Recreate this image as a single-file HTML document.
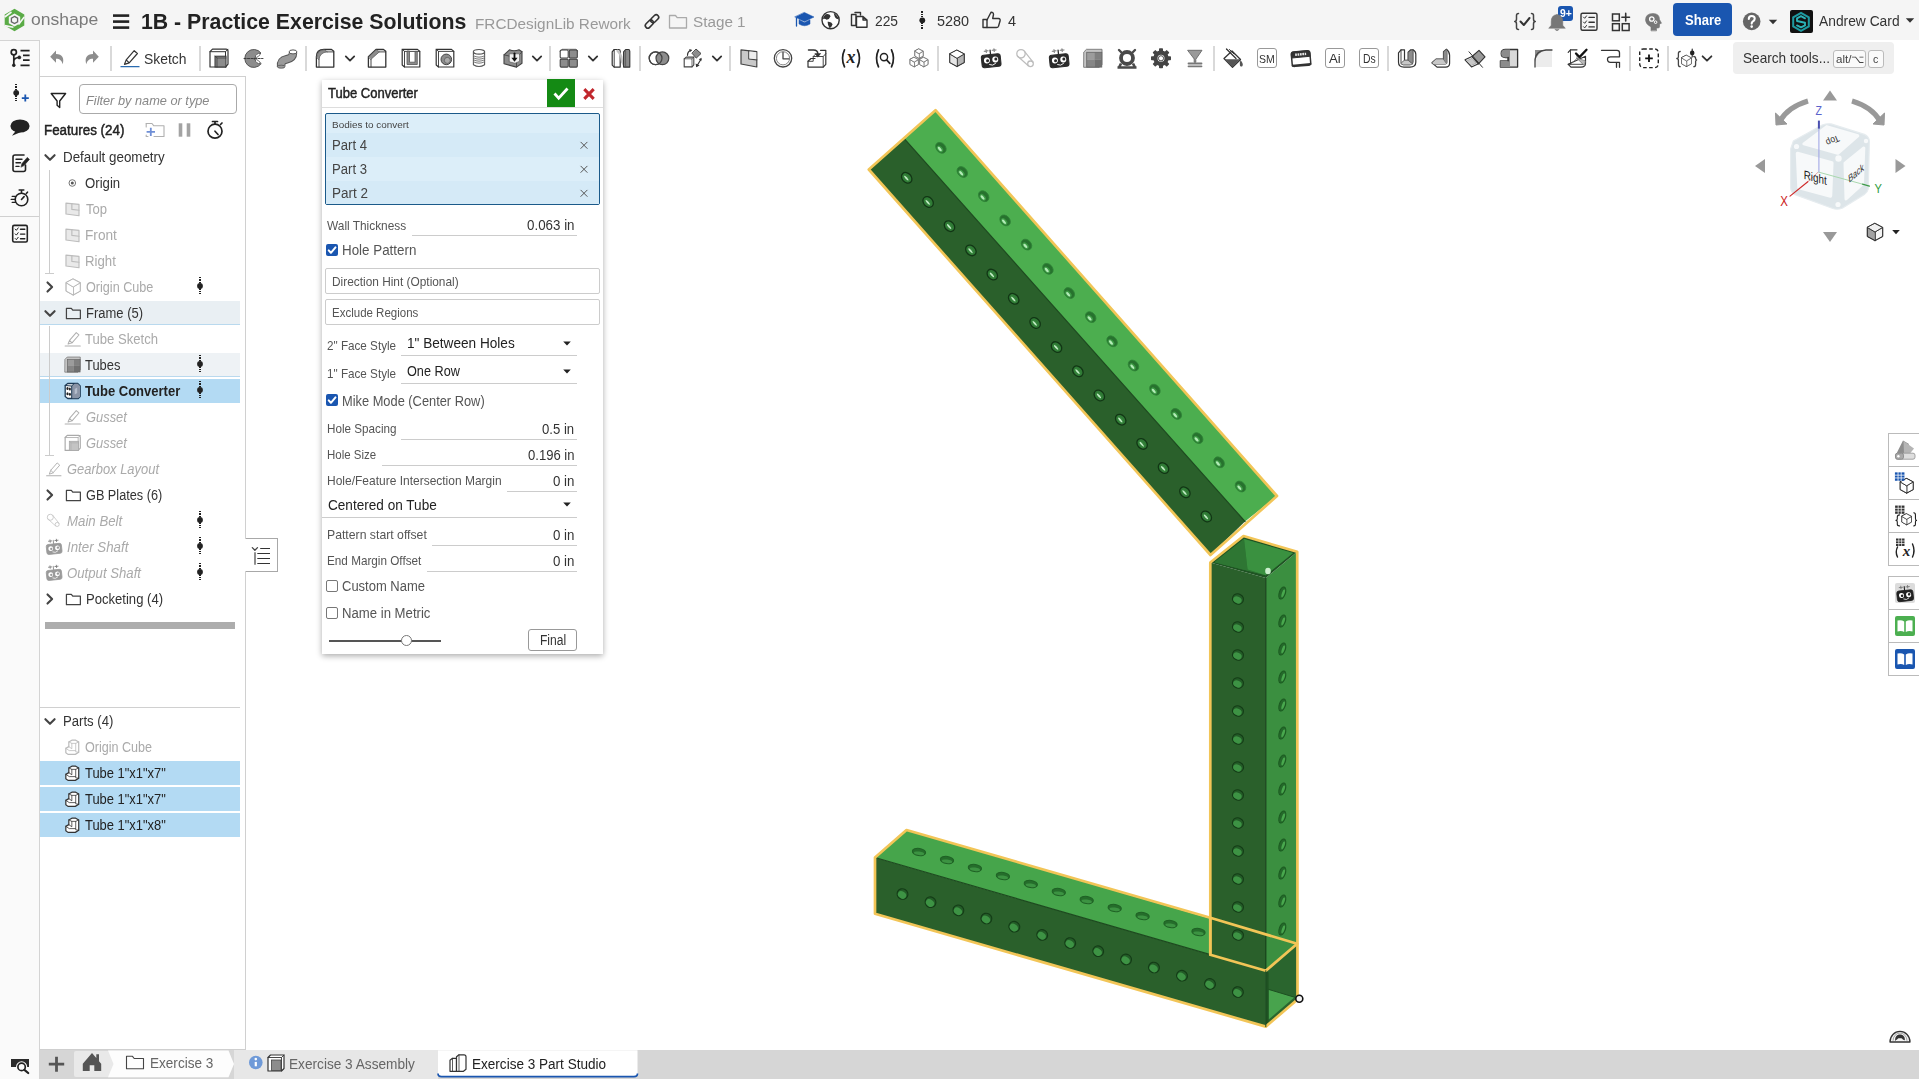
<!DOCTYPE html><html><head><meta charset="utf-8"><title>Onshape</title><style>
*{box-sizing:border-box;margin:0;padding:0}
html,body{width:1919px;height:1079px;overflow:hidden;background:#fff;font-family:"Liberation Sans",sans-serif}
.t{position:absolute;white-space:nowrap;line-height:1;transform-origin:0 50%;display:block}
.b{position:absolute}
svg{position:absolute;left:0;top:0;overflow:visible}
</style></head><body><svg width="1919" height="1079" viewBox="0 0 1919 1079"><polygon points="935.5,110.2 1277.0,496.0 1245.0,521.5 904.5,138.8" fill="#4cae4f" stroke="none" stroke-width="0" stroke-linejoin="round" /><polygon points="904.5,138.8 1245.0,521.5 1210.5,555.0 868.8,169.5" fill="#2a602b" stroke="none" stroke-width="0" stroke-linejoin="round" /><line x1="904.5" y1="138.8" x2="1245.0" y2="521.5" stroke="#1c4a1e" stroke-width="1.2" stroke-linecap="round"/><polygon points="935.5,110.2 1277.0,496.0 1210.5,555.0 868.8,169.5" fill="none" stroke="#f2c557" stroke-width="2.7" stroke-linejoin="round" stroke-linecap="round"/><g transform="translate(940.9,147.8) rotate(48)"><ellipse rx="6" ry="4.6" fill="#27722e" stroke="#2f8337" stroke-width="0.8"/><ellipse cx="0.2" cy="1.4" rx="3.9" ry="2.4" fill="#3d9b45"/><ellipse cx="0.2" cy="1.7" rx="2.7" ry="1.2" fill="#b4ecb8"/></g><g transform="translate(906.7,177.8) rotate(48)"><ellipse rx="5.9" ry="4.6" fill="#2f7a35" stroke="#123615" stroke-width="1.3"/><ellipse cx="0" cy="0.5" rx="3.9" ry="2.5" fill="#34823a"/><ellipse cx="0" cy="0.5" rx="3.1" ry="0.9" fill="#c4eec7"/></g><g transform="translate(962.3,172.0) rotate(48)"><ellipse rx="6" ry="4.6" fill="#27722e" stroke="#2f8337" stroke-width="0.8"/><ellipse cx="0.2" cy="1.4" rx="3.9" ry="2.4" fill="#3d9b45"/><ellipse cx="0.2" cy="1.7" rx="2.7" ry="1.2" fill="#b4ecb8"/></g><g transform="translate(928.1,202.0) rotate(48)"><ellipse rx="5.9" ry="4.6" fill="#2f7a35" stroke="#123615" stroke-width="1.3"/><ellipse cx="0" cy="0.5" rx="3.9" ry="2.5" fill="#34823a"/><ellipse cx="0" cy="0.5" rx="3.1" ry="0.9" fill="#c4eec7"/></g><g transform="translate(983.7,196.2) rotate(48)"><ellipse rx="6" ry="4.6" fill="#27722e" stroke="#2f8337" stroke-width="0.8"/><ellipse cx="0.2" cy="1.4" rx="3.9" ry="2.4" fill="#3d9b45"/><ellipse cx="0.2" cy="1.7" rx="2.7" ry="1.2" fill="#b4ecb8"/></g><g transform="translate(949.5,226.2) rotate(48)"><ellipse rx="5.9" ry="4.6" fill="#2f7a35" stroke="#123615" stroke-width="1.3"/><ellipse cx="0" cy="0.5" rx="3.9" ry="2.5" fill="#34823a"/><ellipse cx="0" cy="0.5" rx="3.1" ry="0.9" fill="#c4eec7"/></g><g transform="translate(1005.1,220.4) rotate(48)"><ellipse rx="6" ry="4.6" fill="#27722e" stroke="#2f8337" stroke-width="0.8"/><ellipse cx="0.2" cy="1.4" rx="3.9" ry="2.4" fill="#3d9b45"/><ellipse cx="0.2" cy="1.7" rx="2.7" ry="1.2" fill="#b4ecb8"/></g><g transform="translate(970.9,250.4) rotate(48)"><ellipse rx="5.9" ry="4.6" fill="#2f7a35" stroke="#123615" stroke-width="1.3"/><ellipse cx="0" cy="0.5" rx="3.9" ry="2.5" fill="#34823a"/><ellipse cx="0" cy="0.5" rx="3.1" ry="0.9" fill="#c4eec7"/></g><g transform="translate(1026.5,244.6) rotate(48)"><ellipse rx="6" ry="4.6" fill="#27722e" stroke="#2f8337" stroke-width="0.8"/><ellipse cx="0.2" cy="1.4" rx="3.9" ry="2.4" fill="#3d9b45"/><ellipse cx="0.2" cy="1.7" rx="2.7" ry="1.2" fill="#b4ecb8"/></g><g transform="translate(992.3,274.6) rotate(48)"><ellipse rx="5.9" ry="4.6" fill="#2f7a35" stroke="#123615" stroke-width="1.3"/><ellipse cx="0" cy="0.5" rx="3.9" ry="2.5" fill="#34823a"/><ellipse cx="0" cy="0.5" rx="3.1" ry="0.9" fill="#c4eec7"/></g><g transform="translate(1047.9,268.8) rotate(48)"><ellipse rx="6" ry="4.6" fill="#27722e" stroke="#2f8337" stroke-width="0.8"/><ellipse cx="0.2" cy="1.4" rx="3.9" ry="2.4" fill="#3d9b45"/><ellipse cx="0.2" cy="1.7" rx="2.7" ry="1.2" fill="#b4ecb8"/></g><g transform="translate(1013.7,298.8) rotate(48)"><ellipse rx="5.9" ry="4.6" fill="#2f7a35" stroke="#123615" stroke-width="1.3"/><ellipse cx="0" cy="0.5" rx="3.9" ry="2.5" fill="#34823a"/><ellipse cx="0" cy="0.5" rx="3.1" ry="0.9" fill="#c4eec7"/></g><g transform="translate(1069.3,293.0) rotate(48)"><ellipse rx="6" ry="4.6" fill="#27722e" stroke="#2f8337" stroke-width="0.8"/><ellipse cx="0.2" cy="1.4" rx="3.9" ry="2.4" fill="#3d9b45"/><ellipse cx="0.2" cy="1.7" rx="2.7" ry="1.2" fill="#b4ecb8"/></g><g transform="translate(1035.1,323.0) rotate(48)"><ellipse rx="5.9" ry="4.6" fill="#2f7a35" stroke="#123615" stroke-width="1.3"/><ellipse cx="0" cy="0.5" rx="3.9" ry="2.5" fill="#34823a"/><ellipse cx="0" cy="0.5" rx="3.1" ry="0.9" fill="#c4eec7"/></g><g transform="translate(1090.7,317.1) rotate(48)"><ellipse rx="6" ry="4.6" fill="#27722e" stroke="#2f8337" stroke-width="0.8"/><ellipse cx="0.2" cy="1.4" rx="3.9" ry="2.4" fill="#3d9b45"/><ellipse cx="0.2" cy="1.7" rx="2.7" ry="1.2" fill="#b4ecb8"/></g><g transform="translate(1056.5,347.1) rotate(48)"><ellipse rx="5.9" ry="4.6" fill="#2f7a35" stroke="#123615" stroke-width="1.3"/><ellipse cx="0" cy="0.5" rx="3.9" ry="2.5" fill="#34823a"/><ellipse cx="0" cy="0.5" rx="3.1" ry="0.9" fill="#c4eec7"/></g><g transform="translate(1112.1,341.3) rotate(48)"><ellipse rx="6" ry="4.6" fill="#27722e" stroke="#2f8337" stroke-width="0.8"/><ellipse cx="0.2" cy="1.4" rx="3.9" ry="2.4" fill="#3d9b45"/><ellipse cx="0.2" cy="1.7" rx="2.7" ry="1.2" fill="#b4ecb8"/></g><g transform="translate(1077.9,371.3) rotate(48)"><ellipse rx="5.9" ry="4.6" fill="#2f7a35" stroke="#123615" stroke-width="1.3"/><ellipse cx="0" cy="0.5" rx="3.9" ry="2.5" fill="#34823a"/><ellipse cx="0" cy="0.5" rx="3.1" ry="0.9" fill="#c4eec7"/></g><g transform="translate(1133.5,365.5) rotate(48)"><ellipse rx="6" ry="4.6" fill="#27722e" stroke="#2f8337" stroke-width="0.8"/><ellipse cx="0.2" cy="1.4" rx="3.9" ry="2.4" fill="#3d9b45"/><ellipse cx="0.2" cy="1.7" rx="2.7" ry="1.2" fill="#b4ecb8"/></g><g transform="translate(1099.3,395.5) rotate(48)"><ellipse rx="5.9" ry="4.6" fill="#2f7a35" stroke="#123615" stroke-width="1.3"/><ellipse cx="0" cy="0.5" rx="3.9" ry="2.5" fill="#34823a"/><ellipse cx="0" cy="0.5" rx="3.1" ry="0.9" fill="#c4eec7"/></g><g transform="translate(1154.9,389.7) rotate(48)"><ellipse rx="6" ry="4.6" fill="#27722e" stroke="#2f8337" stroke-width="0.8"/><ellipse cx="0.2" cy="1.4" rx="3.9" ry="2.4" fill="#3d9b45"/><ellipse cx="0.2" cy="1.7" rx="2.7" ry="1.2" fill="#b4ecb8"/></g><g transform="translate(1120.7,419.7) rotate(48)"><ellipse rx="5.9" ry="4.6" fill="#2f7a35" stroke="#123615" stroke-width="1.3"/><ellipse cx="0" cy="0.5" rx="3.9" ry="2.5" fill="#34823a"/><ellipse cx="0" cy="0.5" rx="3.1" ry="0.9" fill="#c4eec7"/></g><g transform="translate(1176.3,413.9) rotate(48)"><ellipse rx="6" ry="4.6" fill="#27722e" stroke="#2f8337" stroke-width="0.8"/><ellipse cx="0.2" cy="1.4" rx="3.9" ry="2.4" fill="#3d9b45"/><ellipse cx="0.2" cy="1.7" rx="2.7" ry="1.2" fill="#b4ecb8"/></g><g transform="translate(1142.1,443.9) rotate(48)"><ellipse rx="5.9" ry="4.6" fill="#2f7a35" stroke="#123615" stroke-width="1.3"/><ellipse cx="0" cy="0.5" rx="3.9" ry="2.5" fill="#34823a"/><ellipse cx="0" cy="0.5" rx="3.1" ry="0.9" fill="#c4eec7"/></g><g transform="translate(1197.7,438.1) rotate(48)"><ellipse rx="6" ry="4.6" fill="#27722e" stroke="#2f8337" stroke-width="0.8"/><ellipse cx="0.2" cy="1.4" rx="3.9" ry="2.4" fill="#3d9b45"/><ellipse cx="0.2" cy="1.7" rx="2.7" ry="1.2" fill="#b4ecb8"/></g><g transform="translate(1163.5,468.1) rotate(48)"><ellipse rx="5.9" ry="4.6" fill="#2f7a35" stroke="#123615" stroke-width="1.3"/><ellipse cx="0" cy="0.5" rx="3.9" ry="2.5" fill="#34823a"/><ellipse cx="0" cy="0.5" rx="3.1" ry="0.9" fill="#c4eec7"/></g><g transform="translate(1219.1,462.3) rotate(48)"><ellipse rx="6" ry="4.6" fill="#27722e" stroke="#2f8337" stroke-width="0.8"/><ellipse cx="0.2" cy="1.4" rx="3.9" ry="2.4" fill="#3d9b45"/><ellipse cx="0.2" cy="1.7" rx="2.7" ry="1.2" fill="#b4ecb8"/></g><g transform="translate(1184.9,492.3) rotate(48)"><ellipse rx="5.9" ry="4.6" fill="#2f7a35" stroke="#123615" stroke-width="1.3"/><ellipse cx="0" cy="0.5" rx="3.9" ry="2.5" fill="#34823a"/><ellipse cx="0" cy="0.5" rx="3.1" ry="0.9" fill="#c4eec7"/></g><g transform="translate(1240.5,486.5) rotate(48)"><ellipse rx="6" ry="4.6" fill="#27722e" stroke="#2f8337" stroke-width="0.8"/><ellipse cx="0.2" cy="1.4" rx="3.9" ry="2.4" fill="#3d9b45"/><ellipse cx="0.2" cy="1.7" rx="2.7" ry="1.2" fill="#b4ecb8"/></g><g transform="translate(1206.3,516.5) rotate(48)"><ellipse rx="5.9" ry="4.6" fill="#2f7a35" stroke="#123615" stroke-width="1.3"/><ellipse cx="0" cy="0.5" rx="3.9" ry="2.5" fill="#34823a"/><ellipse cx="0" cy="0.5" rx="3.1" ry="0.9" fill="#c4eec7"/></g><polygon points="875.0,857.5 906.5,830.0 1297.2,943.8 1265.8,970.7" fill="#46a54b" stroke="none" stroke-width="0" stroke-linejoin="round" /><polygon points="875.0,857.5 1265.8,970.7 1265.8,1026.6 875.0,913.8" fill="#2a602b" stroke="none" stroke-width="0" stroke-linejoin="round" /><polygon points="1265.8,970.7 1297.2,943.8 1297.5,999.5 1265.8,1026.6" fill="#2a652e" stroke="none" stroke-width="0" stroke-linejoin="round" /><polygon points="1268.6,989.4 1294.5,997.2 1268.6,1019.6" fill="#48a34d" stroke="none" stroke-width="0" stroke-linejoin="round" /><line x1="1268.6" y1="989.4" x2="1294.5" y2="997.2" stroke="#1d4f21" stroke-width="1" stroke-linecap="round"/><polygon points="1265.8,970.7 1268.6,972.5 1268.6,1022.0 1265.8,1026.6" fill="#1f5223" stroke="none" stroke-width="0" stroke-linejoin="round" /><line x1="875.0" y1="857.5" x2="1265.8" y2="970.7" stroke="#1c4a1e" stroke-width="1.2" stroke-linecap="round"/><g transform="translate(919.0,852.0)"><ellipse rx="6.7" ry="3.6" fill="#256d2b" stroke="#1f6125" stroke-width="1" transform="rotate(8)"/><ellipse cx="0" cy="1.3" rx="5.2" ry="1.7" fill="#3c9342" transform="rotate(8 0 1.3)"/></g><g transform="translate(947.0,860.0)"><ellipse rx="6.7" ry="3.6" fill="#256d2b" stroke="#1f6125" stroke-width="1" transform="rotate(8)"/><ellipse cx="0" cy="1.3" rx="5.2" ry="1.7" fill="#3c9342" transform="rotate(8 0 1.3)"/></g><g transform="translate(974.9,868.0)"><ellipse rx="6.7" ry="3.6" fill="#256d2b" stroke="#1f6125" stroke-width="1" transform="rotate(8)"/><ellipse cx="0" cy="1.3" rx="5.2" ry="1.7" fill="#3c9342" transform="rotate(8 0 1.3)"/></g><g transform="translate(1002.9,876.0)"><ellipse rx="6.7" ry="3.6" fill="#256d2b" stroke="#1f6125" stroke-width="1" transform="rotate(8)"/><ellipse cx="0" cy="1.3" rx="5.2" ry="1.7" fill="#3c9342" transform="rotate(8 0 1.3)"/></g><g transform="translate(1030.8,884.0)"><ellipse rx="6.7" ry="3.6" fill="#256d2b" stroke="#1f6125" stroke-width="1" transform="rotate(8)"/><ellipse cx="0" cy="1.3" rx="5.2" ry="1.7" fill="#3c9342" transform="rotate(8 0 1.3)"/></g><g transform="translate(1058.8,892.0)"><ellipse rx="6.7" ry="3.6" fill="#256d2b" stroke="#1f6125" stroke-width="1" transform="rotate(8)"/><ellipse cx="0" cy="1.3" rx="5.2" ry="1.7" fill="#3c9342" transform="rotate(8 0 1.3)"/></g><g transform="translate(1086.7,900.0)"><ellipse rx="6.7" ry="3.6" fill="#256d2b" stroke="#1f6125" stroke-width="1" transform="rotate(8)"/><ellipse cx="0" cy="1.3" rx="5.2" ry="1.7" fill="#3c9342" transform="rotate(8 0 1.3)"/></g><g transform="translate(1114.7,908.0)"><ellipse rx="6.7" ry="3.6" fill="#256d2b" stroke="#1f6125" stroke-width="1" transform="rotate(8)"/><ellipse cx="0" cy="1.3" rx="5.2" ry="1.7" fill="#3c9342" transform="rotate(8 0 1.3)"/></g><g transform="translate(1142.6,916.0)"><ellipse rx="6.7" ry="3.6" fill="#256d2b" stroke="#1f6125" stroke-width="1" transform="rotate(8)"/><ellipse cx="0" cy="1.3" rx="5.2" ry="1.7" fill="#3c9342" transform="rotate(8 0 1.3)"/></g><g transform="translate(1170.5,924.0)"><ellipse rx="6.7" ry="3.6" fill="#256d2b" stroke="#1f6125" stroke-width="1" transform="rotate(8)"/><ellipse cx="0" cy="1.3" rx="5.2" ry="1.7" fill="#3c9342" transform="rotate(8 0 1.3)"/></g><g transform="translate(1198.5,932.0)"><ellipse rx="6.7" ry="3.6" fill="#256d2b" stroke="#1f6125" stroke-width="1" transform="rotate(8)"/><ellipse cx="0" cy="1.3" rx="5.2" ry="1.7" fill="#3c9342" transform="rotate(8 0 1.3)"/></g><g transform="translate(902.5,894.0)"><ellipse rx="5.5" ry="5.2" fill="#235c27" stroke="#143c17" stroke-width="1.1" transform="rotate(30)"/><ellipse cx="-0.5" cy="0.9" rx="4.4" ry="3.4" fill="#3d9344" transform="rotate(35 -0.5 0.9)"/></g><g transform="translate(930.5,902.2)"><ellipse rx="5.5" ry="5.2" fill="#235c27" stroke="#143c17" stroke-width="1.1" transform="rotate(30)"/><ellipse cx="-0.5" cy="0.9" rx="4.4" ry="3.4" fill="#3d9344" transform="rotate(35 -0.5 0.9)"/></g><g transform="translate(958.4,910.3)"><ellipse rx="5.5" ry="5.2" fill="#235c27" stroke="#143c17" stroke-width="1.1" transform="rotate(30)"/><ellipse cx="-0.5" cy="0.9" rx="4.4" ry="3.4" fill="#3d9344" transform="rotate(35 -0.5 0.9)"/></g><g transform="translate(986.4,918.5)"><ellipse rx="5.5" ry="5.2" fill="#235c27" stroke="#143c17" stroke-width="1.1" transform="rotate(30)"/><ellipse cx="-0.5" cy="0.9" rx="4.4" ry="3.4" fill="#3d9344" transform="rotate(35 -0.5 0.9)"/></g><g transform="translate(1014.3,926.7)"><ellipse rx="5.5" ry="5.2" fill="#235c27" stroke="#143c17" stroke-width="1.1" transform="rotate(30)"/><ellipse cx="-0.5" cy="0.9" rx="4.4" ry="3.4" fill="#3d9344" transform="rotate(35 -0.5 0.9)"/></g><g transform="translate(1042.2,934.9)"><ellipse rx="5.5" ry="5.2" fill="#235c27" stroke="#143c17" stroke-width="1.1" transform="rotate(30)"/><ellipse cx="-0.5" cy="0.9" rx="4.4" ry="3.4" fill="#3d9344" transform="rotate(35 -0.5 0.9)"/></g><g transform="translate(1070.2,943.0)"><ellipse rx="5.5" ry="5.2" fill="#235c27" stroke="#143c17" stroke-width="1.1" transform="rotate(30)"/><ellipse cx="-0.5" cy="0.9" rx="4.4" ry="3.4" fill="#3d9344" transform="rotate(35 -0.5 0.9)"/></g><g transform="translate(1098.2,951.2)"><ellipse rx="5.5" ry="5.2" fill="#235c27" stroke="#143c17" stroke-width="1.1" transform="rotate(30)"/><ellipse cx="-0.5" cy="0.9" rx="4.4" ry="3.4" fill="#3d9344" transform="rotate(35 -0.5 0.9)"/></g><g transform="translate(1126.1,959.4)"><ellipse rx="5.5" ry="5.2" fill="#235c27" stroke="#143c17" stroke-width="1.1" transform="rotate(30)"/><ellipse cx="-0.5" cy="0.9" rx="4.4" ry="3.4" fill="#3d9344" transform="rotate(35 -0.5 0.9)"/></g><g transform="translate(1154.0,967.5)"><ellipse rx="5.5" ry="5.2" fill="#235c27" stroke="#143c17" stroke-width="1.1" transform="rotate(30)"/><ellipse cx="-0.5" cy="0.9" rx="4.4" ry="3.4" fill="#3d9344" transform="rotate(35 -0.5 0.9)"/></g><g transform="translate(1182.0,975.7)"><ellipse rx="5.5" ry="5.2" fill="#235c27" stroke="#143c17" stroke-width="1.1" transform="rotate(30)"/><ellipse cx="-0.5" cy="0.9" rx="4.4" ry="3.4" fill="#3d9344" transform="rotate(35 -0.5 0.9)"/></g><g transform="translate(1210.0,983.9)"><ellipse rx="5.5" ry="5.2" fill="#235c27" stroke="#143c17" stroke-width="1.1" transform="rotate(30)"/><ellipse cx="-0.5" cy="0.9" rx="4.4" ry="3.4" fill="#3d9344" transform="rotate(35 -0.5 0.9)"/></g><g transform="translate(1237.9,992.0)"><ellipse rx="5.5" ry="5.2" fill="#235c27" stroke="#143c17" stroke-width="1.1" transform="rotate(30)"/><ellipse cx="-0.5" cy="0.9" rx="4.4" ry="3.4" fill="#3d9344" transform="rotate(35 -0.5 0.9)"/></g><polygon points="1210.3,562.5 1265.8,578.0 1265.8,970.7 1210.3,954.7" fill="#2a602b" stroke="none" stroke-width="0" stroke-linejoin="round" /><polygon points="1265.8,578.0 1297.2,551.8 1297.2,943.8 1265.8,970.7" fill="#3b8f40" stroke="none" stroke-width="0" stroke-linejoin="round" /><polygon points="1210.3,562.5 1243.5,536.0 1297.2,551.8 1265.8,578.0" fill="#1f5423" stroke="none" stroke-width="0" stroke-linejoin="round" /><polygon points="1214.5,562.3 1244.0,539.0 1293.0,553.0 1265.6,575.2" fill="#2f7d35" stroke="none" stroke-width="0" stroke-linejoin="round" /><polygon points="1244.0,539.0 1293.0,553.0 1265.6,575.2 1247.5,569.5" fill="#3a9140" stroke="none" stroke-width="0" stroke-linejoin="round" /><polygon points="1214.5,562.3 1244.0,539.0 1247.5,569.5 1265.6,575.2" fill="#2e7633" stroke="none" stroke-width="0" stroke-linejoin="round" /><ellipse cx="1268" cy="571" rx="2.8" ry="3.2" fill="#cdf0cf"/><line x1="1265.8" y1="578.0" x2="1265.8" y2="970.7" stroke="#173f1a" stroke-width="1.2" stroke-linecap="round"/><g transform="translate(1238.0,599.0)"><ellipse rx="5.6" ry="5.1" fill="#235c27" stroke="#143c17" stroke-width="1.1" transform="rotate(25)"/><ellipse cx="-0.6" cy="0.9" rx="4.4" ry="3.3" fill="#3d9344" transform="rotate(28 -0.6 0.9)"/></g><g transform="translate(1238.0,627.0)"><ellipse rx="5.6" ry="5.1" fill="#235c27" stroke="#143c17" stroke-width="1.1" transform="rotate(25)"/><ellipse cx="-0.6" cy="0.9" rx="4.4" ry="3.3" fill="#3d9344" transform="rotate(28 -0.6 0.9)"/></g><g transform="translate(1238.0,655.0)"><ellipse rx="5.6" ry="5.1" fill="#235c27" stroke="#143c17" stroke-width="1.1" transform="rotate(25)"/><ellipse cx="-0.6" cy="0.9" rx="4.4" ry="3.3" fill="#3d9344" transform="rotate(28 -0.6 0.9)"/></g><g transform="translate(1238.0,683.0)"><ellipse rx="5.6" ry="5.1" fill="#235c27" stroke="#143c17" stroke-width="1.1" transform="rotate(25)"/><ellipse cx="-0.6" cy="0.9" rx="4.4" ry="3.3" fill="#3d9344" transform="rotate(28 -0.6 0.9)"/></g><g transform="translate(1238.0,711.0)"><ellipse rx="5.6" ry="5.1" fill="#235c27" stroke="#143c17" stroke-width="1.1" transform="rotate(25)"/><ellipse cx="-0.6" cy="0.9" rx="4.4" ry="3.3" fill="#3d9344" transform="rotate(28 -0.6 0.9)"/></g><g transform="translate(1238.0,739.0)"><ellipse rx="5.6" ry="5.1" fill="#235c27" stroke="#143c17" stroke-width="1.1" transform="rotate(25)"/><ellipse cx="-0.6" cy="0.9" rx="4.4" ry="3.3" fill="#3d9344" transform="rotate(28 -0.6 0.9)"/></g><g transform="translate(1238.0,767.0)"><ellipse rx="5.6" ry="5.1" fill="#235c27" stroke="#143c17" stroke-width="1.1" transform="rotate(25)"/><ellipse cx="-0.6" cy="0.9" rx="4.4" ry="3.3" fill="#3d9344" transform="rotate(28 -0.6 0.9)"/></g><g transform="translate(1238.0,795.0)"><ellipse rx="5.6" ry="5.1" fill="#235c27" stroke="#143c17" stroke-width="1.1" transform="rotate(25)"/><ellipse cx="-0.6" cy="0.9" rx="4.4" ry="3.3" fill="#3d9344" transform="rotate(28 -0.6 0.9)"/></g><g transform="translate(1238.0,823.0)"><ellipse rx="5.6" ry="5.1" fill="#235c27" stroke="#143c17" stroke-width="1.1" transform="rotate(25)"/><ellipse cx="-0.6" cy="0.9" rx="4.4" ry="3.3" fill="#3d9344" transform="rotate(28 -0.6 0.9)"/></g><g transform="translate(1238.0,851.0)"><ellipse rx="5.6" ry="5.1" fill="#235c27" stroke="#143c17" stroke-width="1.1" transform="rotate(25)"/><ellipse cx="-0.6" cy="0.9" rx="4.4" ry="3.3" fill="#3d9344" transform="rotate(28 -0.6 0.9)"/></g><g transform="translate(1238.0,879.0)"><ellipse rx="5.6" ry="5.1" fill="#235c27" stroke="#143c17" stroke-width="1.1" transform="rotate(25)"/><ellipse cx="-0.6" cy="0.9" rx="4.4" ry="3.3" fill="#3d9344" transform="rotate(28 -0.6 0.9)"/></g><g transform="translate(1238.0,907.0)"><ellipse rx="5.6" ry="5.1" fill="#235c27" stroke="#143c17" stroke-width="1.1" transform="rotate(25)"/><ellipse cx="-0.6" cy="0.9" rx="4.4" ry="3.3" fill="#3d9344" transform="rotate(28 -0.6 0.9)"/></g><g transform="translate(1238.0,935.0)"><ellipse rx="5.6" ry="5.1" fill="#235c27" stroke="#143c17" stroke-width="1.1" transform="rotate(25)"/><ellipse cx="-0.6" cy="0.9" rx="4.4" ry="3.3" fill="#3d9344" transform="rotate(28 -0.6 0.9)"/></g><g transform="translate(1282.3,593.0)"><ellipse rx="3.1" ry="6.3" fill="#24692a" stroke="#1b5a20" stroke-width="1" transform="rotate(18)"/><ellipse cx="0.9" cy="0.4" rx="1.3" ry="4.2" fill="#49a84e" transform="rotate(18 0.9 0.4)"/></g><g transform="translate(1282.3,621.0)"><ellipse rx="3.1" ry="6.3" fill="#24692a" stroke="#1b5a20" stroke-width="1" transform="rotate(18)"/><ellipse cx="0.9" cy="0.4" rx="1.3" ry="4.2" fill="#49a84e" transform="rotate(18 0.9 0.4)"/></g><g transform="translate(1282.3,649.0)"><ellipse rx="3.1" ry="6.3" fill="#24692a" stroke="#1b5a20" stroke-width="1" transform="rotate(18)"/><ellipse cx="0.9" cy="0.4" rx="1.3" ry="4.2" fill="#49a84e" transform="rotate(18 0.9 0.4)"/></g><g transform="translate(1282.3,677.0)"><ellipse rx="3.1" ry="6.3" fill="#24692a" stroke="#1b5a20" stroke-width="1" transform="rotate(18)"/><ellipse cx="0.9" cy="0.4" rx="1.3" ry="4.2" fill="#49a84e" transform="rotate(18 0.9 0.4)"/></g><g transform="translate(1282.3,705.0)"><ellipse rx="3.1" ry="6.3" fill="#24692a" stroke="#1b5a20" stroke-width="1" transform="rotate(18)"/><ellipse cx="0.9" cy="0.4" rx="1.3" ry="4.2" fill="#49a84e" transform="rotate(18 0.9 0.4)"/></g><g transform="translate(1282.3,733.0)"><ellipse rx="3.1" ry="6.3" fill="#24692a" stroke="#1b5a20" stroke-width="1" transform="rotate(18)"/><ellipse cx="0.9" cy="0.4" rx="1.3" ry="4.2" fill="#49a84e" transform="rotate(18 0.9 0.4)"/></g><g transform="translate(1282.3,761.0)"><ellipse rx="3.1" ry="6.3" fill="#24692a" stroke="#1b5a20" stroke-width="1" transform="rotate(18)"/><ellipse cx="0.9" cy="0.4" rx="1.3" ry="4.2" fill="#49a84e" transform="rotate(18 0.9 0.4)"/></g><g transform="translate(1282.3,789.0)"><ellipse rx="3.1" ry="6.3" fill="#24692a" stroke="#1b5a20" stroke-width="1" transform="rotate(18)"/><ellipse cx="0.9" cy="0.4" rx="1.3" ry="4.2" fill="#49a84e" transform="rotate(18 0.9 0.4)"/></g><g transform="translate(1282.3,817.0)"><ellipse rx="3.1" ry="6.3" fill="#24692a" stroke="#1b5a20" stroke-width="1" transform="rotate(18)"/><ellipse cx="0.9" cy="0.4" rx="1.3" ry="4.2" fill="#49a84e" transform="rotate(18 0.9 0.4)"/></g><g transform="translate(1282.3,845.0)"><ellipse rx="3.1" ry="6.3" fill="#24692a" stroke="#1b5a20" stroke-width="1" transform="rotate(18)"/><ellipse cx="0.9" cy="0.4" rx="1.3" ry="4.2" fill="#49a84e" transform="rotate(18 0.9 0.4)"/></g><g transform="translate(1282.3,873.0)"><ellipse rx="3.1" ry="6.3" fill="#24692a" stroke="#1b5a20" stroke-width="1" transform="rotate(18)"/><ellipse cx="0.9" cy="0.4" rx="1.3" ry="4.2" fill="#49a84e" transform="rotate(18 0.9 0.4)"/></g><g transform="translate(1282.3,901.0)"><ellipse rx="3.1" ry="6.3" fill="#24692a" stroke="#1b5a20" stroke-width="1" transform="rotate(18)"/><ellipse cx="0.9" cy="0.4" rx="1.3" ry="4.2" fill="#49a84e" transform="rotate(18 0.9 0.4)"/></g><g transform="translate(1282.3,929.0)"><ellipse rx="3.1" ry="6.3" fill="#24692a" stroke="#1b5a20" stroke-width="1" transform="rotate(18)"/><ellipse cx="0.9" cy="0.4" rx="1.3" ry="4.2" fill="#49a84e" transform="rotate(18 0.9 0.4)"/></g><polyline points="1210.3,917.7 906.5,830.0 875.0,857.5 875.0,913.8 1265.8,1026.6 1297.5,999.5" fill="none" stroke="#f2c557" stroke-width="2.7" stroke-linejoin="round" stroke-linecap="round"/><polygon points="1210.3,917.7 1210.3,954.7 1265.8,970.7 1297.2,943.8" fill="none" stroke="#f2c557" stroke-width="2.7" stroke-linejoin="round" stroke-linecap="round"/><polyline points="1210.3,954.7 1210.3,562.5 1243.5,536.0 1297.2,551.8 1297.5,999.5" fill="none" stroke="#f2c557" stroke-width="2.7" stroke-linejoin="round" stroke-linecap="round"/><line x1="1265.8" y1="970.7" x2="1265.8" y2="1026.6" stroke="#1b4a1f" stroke-width="1" stroke-linecap="round"/><circle cx="1299.3" cy="998.8" r="3.5" fill="#f4f4f4" stroke="#111" stroke-width="1.6"/></svg><div class="b" style="left:0px;top:0px;width:1919px;height:40px;background:#f5f5f5"></div><div class="b" style="left:40px;top:40px;width:1879px;height:37px;background:#fff"></div><div class="b" style="left:0px;top:40px;width:40px;height:1039px;background:#fafafa;border-right:1px solid #d4d4d4;border-top:1px solid #d4d4d4"></div><div class="b" style="left:0px;top:216px;width:39px;height:1px;background:#d0d0d0"></div><div class="b" style="left:1673px;top:3px;width:59px;height:33px;background:#1a56b0;border-radius:4px"></div><div class="b" style="left:1790px;top:10px;width:23px;height:23px;background:#111;border-radius:2px"></div><div class="b" style="left:1558px;top:6px;width:15px;height:15px;background:#1a56b0;border-radius:3px"></div><div class="b" style="left:1733.3px;top:42px;width:160.4px;height:32px;background:#efefef;border-radius:4px"></div><div class="b" style="left:1833.3px;top:50px;width:33px;height:18px;background:#fafafa;border:1px solid #bbb;border-radius:3px"></div><div class="b" style="left:1867.5px;top:50px;width:16.3px;height:18px;background:#fafafa;border:1px solid #bbb;border-radius:3px"></div><div class="b" style="left:109.9px;top:45.5px;width:2px;height:25.5px;background:#d9d9d9"></div><div class="b" style="left:198.8px;top:45.5px;width:2px;height:25.5px;background:#d9d9d9"></div><div class="b" style="left:304.8px;top:45.5px;width:2px;height:25.5px;background:#d9d9d9"></div><div class="b" style="left:548.7px;top:45.5px;width:2px;height:25.5px;background:#d9d9d9"></div><div class="b" style="left:639px;top:45.5px;width:2px;height:25.5px;background:#d9d9d9"></div><div class="b" style="left:729px;top:45.5px;width:2px;height:25.5px;background:#d9d9d9"></div><div class="b" style="left:936.5px;top:45.5px;width:2px;height:25.5px;background:#d9d9d9"></div><div class="b" style="left:1212.8px;top:45.5px;width:2px;height:25.5px;background:#d9d9d9"></div><div class="b" style="left:1386.5px;top:45.5px;width:2px;height:25.5px;background:#d9d9d9"></div><div class="b" style="left:1629px;top:45.5px;width:2px;height:25.5px;background:#d9d9d9"></div><div class="b" style="left:1666.5px;top:45.5px;width:2px;height:25.5px;background:#d9d9d9"></div><div class="b" style="left:1257px;top:48px;width:20px;height:20px;border:1px solid #999;border-radius:3px;background:#fff"></div><div class="b" style="left:1325px;top:48px;width:20px;height:20px;border:1px solid #999;border-radius:3px;background:#fff"></div><div class="b" style="left:1359px;top:48px;width:20px;height:20px;border:1px solid #999;border-radius:3px;background:#fff"></div><div class="b" style="left:40px;top:76px;width:206px;height:974px;background:#fff;border-right:1px solid #d0d0d0;border-top:1px solid #d0d0d0"></div><div class="b" style="left:79px;top:84px;width:158px;height:30px;border:1px solid #aaa;border-radius:4px;background:#fff"></div><div class="b" style="left:40px;top:301px;width:200px;height:24px;background:#e9eff3;border-bottom:1px solid #b9d9ee"></div><div class="b" style="left:40px;top:353px;width:200px;height:24px;background:#eef2f5;border-bottom:1px solid #b9d9ee"></div><div class="b" style="left:40px;top:379px;width:200px;height:24px;background:#b3daf3"></div><div class="b" style="left:49px;top:170px;width:1px;height:104px;background:#ccc"></div><div class="b" style="left:45px;top:273px;width:9px;height:1px;background:#ccc"></div><div class="b" style="left:49px;top:326px;width:1px;height:130px;background:#ccc"></div><div class="b" style="left:45px;top:455px;width:9px;height:1px;background:#ccc"></div><div class="b" style="left:45px;top:622px;width:190px;height:7px;background:#adadad"></div><div class="b" style="left:40px;top:707px;width:200px;height:1px;background:#d0d0d0"></div><div class="b" style="left:40px;top:761px;width:200px;height:24px;background:#b3daf3"></div><div class="b" style="left:40px;top:787px;width:200px;height:24px;background:#b3daf3"></div><div class="b" style="left:40px;top:813px;width:200px;height:24px;background:#b3daf3"></div><div class="b" style="left:246px;top:538px;width:32px;height:34px;background:#fff;border:1px solid #a8a8a8;border-left:none"></div><div class="b" style="left:245px;top:539px;width:1px;height:32px;background:#fff"></div><div class="b" style="left:40px;top:1050px;width:1879px;height:29px;background:#d6d6d6"></div><div class="b" style="left:40px;top:1049px;width:206px;height:1px;background:#cfcfcf"></div><svg width="1919" height="1079" viewBox="0 0 1919 1079"><rect x="234" y="1050" width="204" height="29" fill="#e7e7e7"/><path d="M74,1053 Q74,1051 76,1051 H112 L116.5,1064 L112,1077 H76 Q74,1077 74,1075 Z" fill="#e9e9e9"/><polygon points="108,1050.6 228.5,1050.6 234,1064 228.5,1077.3 108,1077.3 113.5,1064" fill="#fdfdfd"/><path d="M438,1050.3 H637.5 V1074 Q637.5,1077 634,1077 H441.5 Q438,1077 438,1074 Z" fill="#fff"/><path d="M438,1073.5 Q438,1076.6 441.5,1076.6 H634 Q637.5,1076.6 637.5,1073.5" fill="none" stroke="#1a56b0" stroke-width="1.7"/></svg><div class="b" style="left:1888px;top:433px;width:31px;height:133px;background:#fff;border:1px solid #bbb;border-right:none"></div><div class="b" style="left:1888px;top:466px;width:31px;height:1px;background:#bbb"></div><div class="b" style="left:1888px;top:499px;width:31px;height:1px;background:#bbb"></div><div class="b" style="left:1888px;top:532px;width:31px;height:1px;background:#bbb"></div><div class="b" style="left:1888px;top:576px;width:31px;height:100px;background:#fff;border:1px solid #bbb;border-right:none"></div><div class="b" style="left:1888px;top:609px;width:31px;height:1px;background:#bbb"></div><div class="b" style="left:1888px;top:642px;width:31px;height:1px;background:#bbb"></div><div class="b" style="left:322px;top:80px;width:281px;height:574px;background:#fff;box-shadow:0 2px 6px rgba(0,0,0,.33)"></div><div class="b" style="left:322px;top:107px;width:281px;height:1px;background:#ddd"></div><div class="b" style="left:547px;top:79px;width:28px;height:28px;background:#148a14"></div><div class="b" style="left:325px;top:113px;width:275px;height:92px;background:#dceef9;border:1px solid #1b5a8a;border-radius:2px"></div><div class="b" style="left:326px;top:133px;width:273px;height:24px;background:#d5eaf7"></div><div class="b" style="left:326px;top:181px;width:273px;height:23px;background:#d5eaf7"></div><div class="b" style="left:325px;top:268px;width:275px;height:26px;border:1px solid #ccc;border-radius:2px"></div><div class="b" style="left:325px;top:299px;width:275px;height:26px;border:1px solid #ccc;border-radius:2px"></div><div class="b" style="left:412px;top:235px;width:165px;height:1px;background:#ccc"></div><div class="b" style="left:401px;top:355px;width:176px;height:1px;background:#ccc"></div><div class="b" style="left:401px;top:383px;width:176px;height:1px;background:#ccc"></div><div class="b" style="left:401px;top:439px;width:176px;height:1px;background:#ccc"></div><div class="b" style="left:382px;top:465px;width:195px;height:1px;background:#ccc"></div><div class="b" style="left:507px;top:491px;width:70px;height:1px;background:#ccc"></div><div class="b" style="left:322px;top:517px;width:255px;height:1px;background:#ccc"></div><div class="b" style="left:432px;top:545px;width:145px;height:1px;background:#ccc"></div><div class="b" style="left:427px;top:571px;width:150px;height:1px;background:#ccc"></div><div class="b" style="left:326px;top:244px;width:12px;height:12px;background:#1a56b0;border-radius:2px"></div><div class="b" style="left:326px;top:394px;width:12px;height:12px;background:#1a56b0;border-radius:2px"></div><div class="b" style="left:326px;top:580px;width:12px;height:12px;background:#fff;border:1px solid #777;border-radius:2px"></div><div class="b" style="left:326px;top:607px;width:12px;height:12px;background:#fff;border:1px solid #777;border-radius:2px"></div><div class="b" style="left:329px;top:640px;width:112px;height:2px;background:#555"></div><div class="b" style="left:401px;top:635px;width:11px;height:11px;background:#fff;border:1px solid #777;border-radius:50%"></div><div class="b" style="left:528px;top:629px;width:49px;height:22px;background:#fff;border:1px solid #999;border-radius:3px"></div><svg width="1919" height="1079" viewBox="0 0 1919 1079" style="pointer-events:none"><g transform="translate(14.5,20)" ><polygon points="0,-11.3 9.8,-5.6 9.8,5.6 0,11.3 -9.8,5.6 -9.8,-5.6" fill="#5aab46"/><polygon points="0,-6.6 5.7,-3.3 5.7,3.3 0,6.6 -5.7,3.3 -5.7,-3.3" fill="#f5f5f5"/><path d="M-9.8,-3 L-3,-8 M9.8,-3 L4,4.5 M-9.8,5.6 L-1,7.2" stroke="#f5f5f5" stroke-width="1.6" fill="none"/><polygon points="0,-3.6 3.1,-1.8 3.1,1.8 0,3.6 -3.1,1.8 -3.1,-1.8" fill="none" stroke="#666" stroke-width="1.3"/></g><g transform="translate(121,21.6)" ><rect x="-8" y="-7.3" width="16.2" height="2.6" rx="0" fill="#222" stroke="none" stroke-width="0" /><rect x="-8" y="-1.3" width="16.2" height="2.6" rx="0" fill="#222" stroke="none" stroke-width="0" /><rect x="-8" y="4.7" width="16.2" height="2.6" rx="0" fill="#222" stroke="none" stroke-width="0" /></g><g transform="translate(652,21.4)" ><g transform="rotate(-45)"><rect x="-8.4" y="-2.5" width="9.3" height="5" rx="2.5" fill="none" stroke="#333" stroke-width="1.6" /><rect x="-0.9" y="-2.5" width="9.3" height="5" rx="2.5" fill="none" stroke="#333" stroke-width="1.6" /></g></g><g transform="translate(678,21.5)" ><path d="M-8.5,-6 H-2.5 L-0.8,-3.8 H8.5 V6.5 H-8.5 Z" fill="none" stroke="#aaa" stroke-width="1.3" stroke-linejoin="round" stroke-linecap="round" /></g><g transform="translate(804.5,19.5)" ><path d="M0,-7 L9.5,-2.5 L0,2 L-9.5,-2.5 Z" fill="#1a56b0" stroke="#1a56b0" stroke-width="0.5" stroke-linejoin="round" stroke-linecap="round" /><path d="M-5.5,0.2 V4.5 Q0,8 5.5,4.5 V0.2 L0,3 Z" fill="#1a56b0" stroke="#1a56b0" stroke-width="0.5" stroke-linejoin="round" stroke-linecap="round" /><path d="M-8,-1.5 V6.5" fill="none" stroke="#1a56b0" stroke-width="1.3" stroke-linejoin="round" stroke-linecap="round" /></g><g transform="translate(830.6,20.2)" ><circle cx="0" cy="0" r="8.6" fill="#fff" stroke="#333" stroke-width="1.4"/><path d="M-5,-6 Q-1,-7 0,-4 Q-1,-1 -4,-0.5 Q-6,-2 -7.5,-1 Q-7.5,-4 -5,-6 Z M-3,1.5 Q1,1 2,4 Q1,7 -1,8 Q-3,5 -3,1.5 Z M3,-7.5 Q7,-5 8,-1 Q5,-1 4,-4 Z" fill="#333" stroke="none" stroke-width="0" stroke-linejoin="round" stroke-linecap="round" /></g><g transform="translate(859,20)" ><path d="M-7.5,-5.5 H-3 V5.5 H-7.5 Z" fill="none" stroke="#333" stroke-width="1.4" stroke-linejoin="round" stroke-linecap="round" /><path d="M-4,-7.5 H1.5 V-5" fill="none" stroke="#333" stroke-width="1.4" stroke-linejoin="round" stroke-linecap="round" /><path d="M-2.5,-3.5 H4 L8,0 V7.2 H-2.5 Z M4,-3.5 V0 H8" fill="#fff" stroke="#333" stroke-width="1.4" stroke-linejoin="round" stroke-linecap="round" /></g><g transform="translate(922.3,20.3)" ><circle cx="0" cy="0" r="2.9" fill="#222" stroke="#222" stroke-width="0"/><path d="M0,-8.8 V9" fill="none" stroke="#222" stroke-width="1.8" stroke-dasharray="1.25 1" shape-rendering="crispEdges"/></g><g transform="translate(991.5,20)" ><path d="M-8.5,-0.5 H-4.5 V7.5 H-8.5 Z" fill="none" stroke="#333" stroke-width="1.4" stroke-linejoin="round" stroke-linecap="round" /><path d="M-4.5,0 L-0.5,-7.8 Q2,-8 2,-5.5 L1.2,-1.5 H7 Q9,-1.2 8.6,0.8 L7,6.2 Q6.5,7.5 5,7.5 H-4.5" fill="none" stroke="#333" stroke-width="1.4" stroke-linejoin="round" stroke-linecap="round" /></g><g transform="translate(1525,21.5)" ><path d="M-6.5,-8 Q-8.5,-8 -8.5,-6 V-2.5 Q-8.5,0 -10.3,0 Q-8.5,0 -8.5,2.5 V6 Q-8.5,8 -6.5,8" fill="none" stroke="#444" stroke-width="1.5" stroke-linejoin="round" stroke-linecap="round" /><path d="M6.5,-8 Q8.5,-8 8.5,-6 V-2.5 Q8.5,0 10.3,0 Q8.5,0 8.5,2.5 V6 Q8.5,8 6.5,8" fill="none" stroke="#444" stroke-width="1.5" stroke-linejoin="round" stroke-linecap="round" /><path d="M-4.5,0 L-1.2,3.5 L4.5,-3.5" fill="none" stroke="#333" stroke-width="2" stroke-linejoin="round" stroke-linecap="round" /></g><g transform="translate(1557,22.5)" ><path d="M0,-8 Q-5.8,-7.5 -5.8,-1 V2.8 L-8.3,5.8 H8.3 L5.8,2.8 V-1 Q5.8,-7.5 0,-8 Z" fill="#777" stroke="#777" stroke-width="0.5" stroke-linejoin="round" stroke-linecap="round" /><path d="M-2,7 Q0,9.5 2,7 Z" fill="#777" stroke="#777" stroke-width="0.5" stroke-linejoin="round" stroke-linecap="round" /></g><g transform="translate(1589,21.7)" ><rect x="-8" y="-8.5" width="16" height="17" rx="1.5" fill="none" stroke="#333" stroke-width="1.4" /><path d="M-5.5,-4.6 L-4.3,-3.4 L-2.5,-5.8 M-5.5,0.4 L-4.3,1.6 L-2.5,-0.8 M-5.5,5 L-4.3,6.2 L-2.5,3.8" fill="none" stroke="#333" stroke-width="1" stroke-linejoin="round" stroke-linecap="round" /><path d="M0,-4.3 H5.3 M0,0.5 H5.3 M0,5.2 H5.3" fill="none" stroke="#333" stroke-width="1.4" stroke-linejoin="round" stroke-linecap="round" /></g><g transform="translate(1621,22)" ><rect x="-8.5" y="-8" width="6.8" height="6.8" rx="0" fill="none" stroke="#333" stroke-width="1.5" /><rect x="-8.5" y="1.7" width="6.8" height="6.8" rx="0" fill="none" stroke="#333" stroke-width="1.5" /><rect x="1.3" y="1.7" width="6.8" height="6.8" rx="0" fill="none" stroke="#333" stroke-width="1.5" /><path d="M4.7,-8.6 V-1 M0.9,-4.8 H8.5" fill="none" stroke="#333" stroke-width="1.6" stroke-linejoin="round" stroke-linecap="round" /></g><g transform="translate(1653,22)" ><path d="M-2,8.5 V5 Q-7.5,2 -7.5,-2 Q-7.5,-8.5 0,-8.5 Q6.5,-8.5 6.5,-2.5 L8.5,1.2 L6.5,2 V4.8 Q6.5,6 5,6 H3.5 V8.5 Z" fill="#777" stroke="#777" stroke-width="0.6" stroke-linejoin="round" stroke-linecap="round" /><circle cx="-1.2" cy="-3" r="2.2" fill="none" stroke="#fff" stroke-width="1.3"/><circle cx="2.6" cy="0.2" r="1.3" fill="none" stroke="#fff" stroke-width="1"/></g><g transform="translate(1751.7,21.4)" ><circle cx="0" cy="0" r="8.8" fill="#666" stroke="none" stroke-width="0"/><path d="M-2.9,-2.5 Q-2.9,-5.4 0,-5.4 Q3,-5.4 3,-2.7 Q3,-1 0.9,0.2 Q0,0.8 0,2.2" fill="none" stroke="#fff" stroke-width="2.1" stroke-linejoin="round" stroke-linecap="round" /><circle cx="0" cy="5.2" r="1.3" fill="#fff" stroke="none" stroke-width="0"/></g><g transform="translate(1773,21.8)" ><path d="M-4.2,-2.1 H4.2 L0,2.4 Z" fill="#333"/></g><g transform="translate(1910,20.3)" ><path d="M-4.2,-2.1 H4.2 L0,2.4 Z" fill="#333"/></g><g transform="translate(1801,21.8)" ><polygon points="0,-9 7.8,-4.5 7.8,4.5 0,9 -7.8,4.5 -7.8,-4.5" fill="none" stroke="#1e9aa0" stroke-width="2"/><path d="M4,-3.5 L0,-5.6 L-4,-3.5 V-0.8 L4,1 V3.6 L0,5.6 L-4,3.6" fill="none" stroke="#2bb3b8" stroke-width="1.9" stroke-linejoin="round" stroke-linecap="round" /></g><g transform="translate(20,58)" ><circle cx="-6.2" cy="-5.8" r="2.6" fill="none" stroke="#222" stroke-width="1.7"/><path d="M-6.2,-3.2 V7.5 M-6.2,3 Q-6,0 -1.5,-0.5" fill="none" stroke="#222" stroke-width="1.7" stroke-linejoin="round" stroke-linecap="round" /><circle cx="-6.2" cy="7.2" r="1.5" fill="#222" stroke="#222" stroke-width="0.5"/><circle cx="-0.7" cy="-0.6" r="1.6" fill="#222" stroke="#222" stroke-width="0.5"/><path d="M0.5,-7.3 H9.6 M3,-2.6 H9.6 M3,2.2 H9.6 M0.5,7.3 H9.6" fill="none" stroke="#222" stroke-width="1.8" stroke-linejoin="round" stroke-linecap="butt"/></g><g transform="translate(57,57.5)" ><path d="M-6.8,-0.8 L-1,-7 V-3.6 C5.5,-3.6 7.6,1 5.6,6.8 C4.8,3 3,1.2 -1,1.2 V5.2 Z" fill="#8d8d8d" stroke="none" stroke-width="0" stroke-linejoin="round" stroke-linecap="round" /></g><g transform="translate(92,57.5)" ><g transform="scale(-1,1)"><path d="M-6.8,-0.8 L-1,-7 V-3.6 C5.5,-3.6 7.6,1 5.6,6.8 C4.8,3 3,1.2 -1,1.2 V5.2 Z" fill="#8d8d8d" stroke="none" stroke-width="0" stroke-linejoin="round" stroke-linecap="round" /></g></g><g transform="translate(130,58.3)" ><path d="M-5.5,6 L-3.8,1.6 L4.2,-7.6 L7.4,-4.8 L-0.8,4.6 Z M-3.8,1.6 L-0.8,4.6" fill="none" stroke="#333" stroke-width="1.2" stroke-linejoin="round" stroke-linecap="round" /><path d="M-9,8.4 H9" fill="none" stroke="#2a6bb0" stroke-width="1.3" stroke-linejoin="round" stroke-linecap="round" /></g><g transform="translate(219,58.2)" ><path d="M-9,-6.5 L-6.5,-9 H7 Q9,-9 9,-7 V6 L6.5,8.8 H-9 Z" fill="#fff" stroke="#333" stroke-width="1.2" stroke-linejoin="round" stroke-linecap="round" /><path d="M-9,-6.5 H6.5 V8.8 M6.5,-6.5 L9,-9" fill="none" stroke="#333" stroke-width="1" stroke-linejoin="round" stroke-linecap="round" /><rect x="-4" y="-2" width="11" height="10.8" rx="0" fill="#8c8c8c" stroke="#333" stroke-width="1" /><path d="M-4,-2 L-2,-0.2 H7 M-2,-0.2 V8.8" fill="none" stroke="#333" stroke-width="0.7" stroke-linejoin="round" stroke-linecap="round" /></g><g transform="translate(253,58.5)" ><path d="M1,0 L8,-5.4 A9,9 0 1 0 8,5.4 Z" fill="#8c8c8c" stroke="#555" stroke-width="1" stroke-linejoin="round" stroke-linecap="round" /><ellipse cx="4.7" cy="-3.2" rx="2.8" ry="1.3" fill="#fff" stroke="#555" stroke-width="0.8" transform="rotate(-38 4.7 -3.2)"/><ellipse cx="4.7" cy="3.2" rx="2.8" ry="1.3" fill="#fff" stroke="#555" stroke-width="0.8" transform="rotate(38 4.7 3.2)"/><path d="M-9,0 H10" fill="none" stroke="#333" stroke-width="0.9" stroke-linejoin="round" stroke-linecap="round" stroke-dasharray="2.2 1.3"/></g><g transform="translate(287,58.5)" ><path d="M-5.8,8 C-7,-3.5 6,5 6,-6" fill="none" stroke="#555" stroke-width="8.6" stroke-linejoin="round" stroke-linecap="butt"/><path d="M-5.8,8 C-7,-3.5 6,5 6,-6" fill="none" stroke="#9a9a9a" stroke-width="6.6" stroke-linejoin="round" stroke-linecap="butt"/><ellipse cx="6" cy="-6.6" rx="3.9" ry="2" fill="#fff" stroke="#555" stroke-width="1" /><ellipse cx="-5.8" cy="8.2" rx="3.8" ry="1.5" fill="#9a9a9a" stroke="#555" stroke-width="0.8" /></g><g transform="translate(325,58.3)" ><path d="M-8.6,8.8 V-1.5 Q-8.6,-8.8 -1,-8.8 H6.5 L8.8,-7 V8.8 Z" fill="#fff" stroke="#333" stroke-width="1.3" stroke-linejoin="round" stroke-linecap="round" /><path d="M-8.4,-1 Q-8,-8.2 -0.8,-8.6 L2.3,-6.4 Q-5,-6 -6,0.8 Z" fill="#8c8c8c" stroke="#555" stroke-width="0.7" stroke-linejoin="round" stroke-linecap="round" /><path d="M-6,0.8 V8.6 M2.3,-6.4 H8.6" fill="none" stroke="#333" stroke-width="0.9" stroke-linejoin="round" stroke-linecap="round" /></g><g transform="translate(350,58.5)" ><path d="M-4.2,-2.1 L0,2.1 L4.2,-2.1" fill="none" stroke="#333" stroke-width="1.8" stroke-linecap="round" stroke-linejoin="round"/></g><g transform="translate(377,58.3)" ><path d="M-8.6,8.8 V-1.5 L-1,-8.8 H6.5 L8.8,-7 V8.8 Z" fill="#fff" stroke="#333" stroke-width="1.3" stroke-linejoin="round" stroke-linecap="round" /><path d="M-8.4,-1.4 L-0.9,-8.6 L2.3,-6.4 L-6,1 Z" fill="#8c8c8c" stroke="#555" stroke-width="0.7" stroke-linejoin="round" stroke-linecap="round" /><path d="M-6,1 V8.6 M2.3,-6.4 H8.6" fill="none" stroke="#333" stroke-width="0.9" stroke-linejoin="round" stroke-linecap="round" /></g><g transform="translate(411,58.2)" ><path d="M-8.8,-8.8 H6.5 L8.8,-6.8 V8.8 H-6.5 L-8.8,6.8 Z" fill="#fff" stroke="#333" stroke-width="1.2" stroke-linejoin="round" stroke-linecap="round" /><path d="M-8.8,-8.8 L-6.5,-6.8 V8.8 M-6.5,-6.8 H8.8" fill="none" stroke="#333" stroke-width="0.9" stroke-linejoin="round" stroke-linecap="round" /><path d="M-4,-6.8 V6.3 H6.3 V-6.8 H4 V4 H-1.5 V-6.8 Z" fill="#8c8c8c" stroke="#555" stroke-width="0.8" stroke-linejoin="round" stroke-linecap="round" /></g><g transform="translate(445,58.2)" ><path d="M-8.8,-8.8 H6.5 L8.8,-6.8 V8.8 H-6.5 L-8.8,6.8 Z" fill="#fff" stroke="#333" stroke-width="1.2" stroke-linejoin="round" stroke-linecap="round" /><path d="M-8.8,-8.8 L-6.5,-6.8 V8.8 M-6.5,-6.8 H8.8" fill="none" stroke="#333" stroke-width="0.9" stroke-linejoin="round" stroke-linecap="round" /><circle cx="1.3" cy="1.2" r="5.3" fill="#8c8c8c" stroke="#444" stroke-width="1"/><circle cx="2.3" cy="2.2" r="3" fill="#aaa" stroke="#555" stroke-width="0.7"/></g><g transform="translate(479,58.3)" ><path d="M-5.6,-6.5 V6.5 Q0,10 5.6,6.5 V-6.5" fill="#fff" stroke="#555" stroke-width="1.1" stroke-linejoin="round" stroke-linecap="round" /><ellipse cx="0" cy="-6.5" rx="5.6" ry="2.3" fill="#fff" stroke="#555" stroke-width="1.1" /><path d="M-5.6,-2.5 Q0,0.4 5.6,-2.5 M-5.6,-0.5 Q0,2.4 5.6,-0.5 M-5.6,1.5 Q0,4.4 5.6,1.5 M-5.6,3.5 Q0,6.4 5.6,3.5" fill="none" stroke="#777" stroke-width="1" stroke-linejoin="round" stroke-linecap="round" /></g><g transform="translate(513,58.3)" ><path d="M-9,-3.5 L-3.5,-8.5 Q1,-6.5 6,-8.5 L9,-6.5 V5 L3.5,8.8 L-9,5.5 Z" fill="#8c8c8c" stroke="#444" stroke-width="1.1" stroke-linejoin="round" stroke-linecap="round" /><path d="M-9,-3.5 L3.5,-0.5 V8.8 M3.5,-0.5 L9,-6.5" fill="none" stroke="#444" stroke-width="0.9" stroke-linejoin="round" stroke-linecap="round" /><path d="M-3.5,-4.5 H6.5 V3 L2,5 L-3.5,3.5 Z" fill="#f2f2f2" stroke="#555" stroke-width="0.6" stroke-linejoin="round" stroke-linecap="round" /><path d="M1.5,-5 V1" fill="none" stroke="#111" stroke-width="1.8" stroke-linejoin="round" stroke-linecap="round" /><path d="M-1.6,-0.5 H4.6 L1.5,3.4 Z" fill="#111" stroke="none" stroke-width="0" stroke-linejoin="round" stroke-linecap="round" /></g><g transform="translate(537,58.5)" ><path d="M-4.2,-2.1 L0,2.1 L4.2,-2.1" fill="none" stroke="#333" stroke-width="1.8" stroke-linecap="round" stroke-linejoin="round"/></g><g transform="translate(569,58.3)" ><rect x="-8.8" y="-8.3" width="8" height="8" rx="1" fill="#fff" stroke="#444" stroke-width="1.1" /><rect x="0.3" y="-8.3" width="8" height="8" rx="1" fill="#8c8c8c" stroke="#444" stroke-width="1.1" /><rect x="-8.8" y="0.8" width="8" height="8" rx="1" fill="#8c8c8c" stroke="#444" stroke-width="1.1" /><rect x="0.3" y="0.8" width="8" height="8" rx="1" fill="#8c8c8c" stroke="#444" stroke-width="1.1" /><path d="M-8.8,-7 L-7,-9 H7 L8.8,-7.3" fill="none" stroke="#444" stroke-width="0.8" stroke-linejoin="round" stroke-linecap="round" /></g><g transform="translate(593,58.5)" ><path d="M-4.2,-2.1 L0,2.1 L4.2,-2.1" fill="none" stroke="#333" stroke-width="1.8" stroke-linecap="round" stroke-linejoin="round"/></g><g transform="translate(621,58.3)" ><path d="M-8.8,-6.5 L-6.8,-8.8 H-2.2 Q-0.8,-8.8 -0.8,-7 V8.8 H-6.8 L-8.8,6.8 Z" fill="#fff" stroke="#333" stroke-width="1.2" stroke-linejoin="round" stroke-linecap="round" /><path d="M-6.8,-8.8 V8.8" fill="none" stroke="#333" stroke-width="0.9" stroke-linejoin="round" stroke-linecap="round" /><path d="M-3.5,-7.5 Q0.5,-3 0.5,0 Q0.5,4 3,7" fill="none" stroke="#c4c4c4" stroke-width="2.4" stroke-linejoin="round" stroke-linecap="round" /><path d="M2.6,-6.5 L4.6,-8.8 H7.4 Q8.8,-8.8 8.8,-7 V8.8 H2.6 Z" fill="#8c8c8c" stroke="#333" stroke-width="1.1" stroke-linejoin="round" stroke-linecap="round" /><path d="M4.6,-8.8 V8.8" fill="none" stroke="#555" stroke-width="0.8" stroke-linejoin="round" stroke-linecap="round" /></g><g transform="translate(659,58.3)" ><circle cx="-3.4" cy="0" r="6.4" fill="#fff" stroke="#444" stroke-width="1.2"/><circle cx="3.4" cy="0" r="6.4" fill="#8c8c8c" stroke="#444" stroke-width="1.2"/><circle cx="-3.4" cy="0" r="6.4" fill="none" stroke="#444" stroke-width="1.2"/></g><g transform="translate(693,58.3)" ><path d="M-8.8,0.5 L-6.8,-1.2 H0.8 V6.5 L-1,8.6 H-8.8 Z" fill="#fff" stroke="#444" stroke-width="1.1" stroke-linejoin="round" stroke-linecap="round" /><path d="M-8.8,0.5 H-1 V8.6 M-1,0.5 L0.8,-1.2" fill="none" stroke="#444" stroke-width="0.8" stroke-linejoin="round" stroke-linecap="round" /><path d="M3.3,-9 L8,-4.8 L3.3,-0.2 L-0.8,-4.8 Z" fill="#8c8c8c" stroke="#444" stroke-width="1" stroke-linejoin="round" stroke-linecap="round" /><path d="M-5.5,-3 Q-5.5,-7 -2,-8" fill="none" stroke="#333" stroke-width="1.2" stroke-linejoin="round" stroke-linecap="round" /><path d="M-3.8,-9.3 L-0.8,-8.3 L-3,-6.2 Z" fill="#333" stroke="none" stroke-width="0" stroke-linejoin="round" stroke-linecap="round" /><path d="M8,1 L4,7.5" fill="none" stroke="#333" stroke-width="1.2" stroke-linejoin="round" stroke-linecap="round" /><path d="M2.6,5.2 L3.2,9 L6.6,7.2 Z" fill="#333" stroke="none" stroke-width="0" stroke-linejoin="round" stroke-linecap="round" /><path d="M8.6,-0.5 L8.3,3 L5.8,1 Z" fill="#333" stroke="none" stroke-width="0" stroke-linejoin="round" stroke-linecap="round" /></g><g transform="translate(717,58.5)" ><path d="M-4.2,-2.1 L0,2.1 L4.2,-2.1" fill="none" stroke="#333" stroke-width="1.8" stroke-linecap="round" stroke-linejoin="round"/></g><g transform="translate(749,58.2)" ><path d="M-8,-8.3 L7.8,-6.5 V8.8 L-8,5.8 Z" fill="#c9c9c9" stroke="#444" stroke-width="1.2" stroke-linejoin="round" stroke-linecap="round" /><path d="M-0.2,-7.4 V0.6 L7.8,1.6" fill="none" stroke="#444" stroke-width="1.2" stroke-linejoin="round" stroke-linecap="round" /><path d="M0.3,-6.8 L7.3,-6 V1 L0.3,0.2 Z" fill="#eee" stroke="none" stroke-width="0" stroke-linejoin="round" stroke-linecap="round" /></g><g transform="translate(783,58.3)" ><circle cx="0" cy="0" r="8.7" fill="#fff" stroke="#444" stroke-width="1.3"/><circle cx="0" cy="0" r="6.6" fill="none" stroke="#777" stroke-width="0.9"/><path d="M0,-6 V0.5 H6" fill="none" stroke="#444" stroke-width="1.3" stroke-linejoin="round" stroke-linecap="round" /></g><g transform="translate(817,58.3)" ><path d="M-9,3 L-6,0.2 H-2 M8.8,-8 H3.5 M8.8,-8 V6 L6.2,8.8 H-9 V3" fill="none" stroke="#333" stroke-width="1.2" stroke-linejoin="round" stroke-linecap="round" /><path d="M-9,3 H-3.8 V-1.8 H6.2 V8.8 M6.2,-1.8 L8.8,-4.6 M-3.8,-1.8 L-1.6,-4" fill="none" stroke="#333" stroke-width="0.9" stroke-linejoin="round" stroke-linecap="round" /><path d="M-8.5,-8.3 H-3.5 Q0.8,-8.3 0.8,-4.5" fill="none" stroke="#333" stroke-width="1.5" stroke-linejoin="round" stroke-linecap="round" /><path d="M-2.6,-5 H4.2 L0.8,-0.8 Z" fill="#333" stroke="none" stroke-width="0" stroke-linejoin="round" stroke-linecap="round" /></g><g transform="translate(851,58.3)" ><path d="M-6.5,-8.5 Q-10.5,0 -6.5,8.5 M6.5,-8.5 Q10.5,0 6.5,8.5" fill="none" stroke="#222" stroke-width="1.7" stroke-linejoin="round" stroke-linecap="round" /><text x="0" y="4.6" text-anchor="middle" font-family="Liberation Serif, serif" font-style="italic" font-weight="700" font-size="18" fill="#222">x</text></g><g transform="translate(885,58.3)" ><path d="M-6.5,-8.5 Q-10.5,0 -6.5,8.5 M6.5,-8.5 Q10.5,0 6.5,8.5" fill="none" stroke="#222" stroke-width="1.7" stroke-linejoin="round" stroke-linecap="round" /><circle cx="-1" cy="-1.2" r="3.6" fill="none" stroke="#222" stroke-width="1.4"/><path d="M1.6,1.6 L4.8,5" fill="none" stroke="#222" stroke-width="1.7" stroke-linejoin="round" stroke-linecap="round" /></g><g transform="translate(919,58.3)" ><g transform="translate(0,-4.6) scale(0.52)"><path d="M0,-9 L8,-4.8 V4.6 L0,9 L-8,4.6 V-4.8 Z" fill="#fff" stroke="#777" stroke-width="1.8" stroke-linejoin="round" stroke-linecap="round" /><path d="M0,0 L8,-4.8 V4.6 L0,9 Z" fill="#fff" stroke="#777" stroke-width="1.6" stroke-linejoin="round" stroke-linecap="round" /><path d="M0,0 L-8,-4.8 V4.6 L0,9 Z" fill="#fff" stroke="#777" stroke-width="1.6" stroke-linejoin="round" stroke-linecap="round" /><path d="M0,-9 L8,-4.8 L0,0 L-8,-4.8 Z" fill="#fff" stroke="#777" stroke-width="1.6" stroke-linejoin="round" stroke-linecap="round" /></g><g transform="translate(-4.8,3.8) scale(0.52)"><path d="M0,-9 L8,-4.8 V4.6 L0,9 L-8,4.6 V-4.8 Z" fill="#fff" stroke="#777" stroke-width="1.8" stroke-linejoin="round" stroke-linecap="round" /><path d="M0,0 L8,-4.8 V4.6 L0,9 Z" fill="#fff" stroke="#777" stroke-width="1.6" stroke-linejoin="round" stroke-linecap="round" /><path d="M0,0 L-8,-4.8 V4.6 L0,9 Z" fill="#fff" stroke="#777" stroke-width="1.6" stroke-linejoin="round" stroke-linecap="round" /><path d="M0,-9 L8,-4.8 L0,0 L-8,-4.8 Z" fill="#fff" stroke="#777" stroke-width="1.6" stroke-linejoin="round" stroke-linecap="round" /></g><g transform="translate(4.8,3.8) scale(0.52)"><path d="M0,-9 L8,-4.8 V4.6 L0,9 L-8,4.6 V-4.8 Z" fill="#fff" stroke="#777" stroke-width="1.8" stroke-linejoin="round" stroke-linecap="round" /><path d="M0,0 L8,-4.8 V4.6 L0,9 Z" fill="#fff" stroke="#777" stroke-width="1.6" stroke-linejoin="round" stroke-linecap="round" /><path d="M0,0 L-8,-4.8 V4.6 L0,9 Z" fill="#fff" stroke="#777" stroke-width="1.6" stroke-linejoin="round" stroke-linecap="round" /><path d="M0,-9 L8,-4.8 L0,0 L-8,-4.8 Z" fill="#fff" stroke="#777" stroke-width="1.6" stroke-linejoin="round" stroke-linecap="round" /></g></g><g transform="translate(957,58.3)" ><g transform="scale(0.9)"><path d="M0,-9 L8,-4.8 V4.6 L0,9 L-8,4.6 V-4.8 Z" fill="#fff" stroke="#333" stroke-width="1.3" stroke-linejoin="round" stroke-linecap="round" /><path d="M0,0 L8,-4.8 V4.6 L0,9 Z" fill="#b5b5b5" stroke="#333" stroke-width="1" stroke-linejoin="round" stroke-linecap="round" /><path d="M0,0 L-8,-4.8 V4.6 L0,9 Z" fill="#e6e6e6" stroke="#333" stroke-width="1" stroke-linejoin="round" stroke-linecap="round" /><path d="M0,-9 L8,-4.8 L0,0 L-8,-4.8 Z" fill="#fff" stroke="#333" stroke-width="1" stroke-linejoin="round" stroke-linecap="round" /></g></g><g transform="translate(991,59)" ><g transform="rotate(-6)"><rect x="-9.5" y="-4.5" width="19" height="12.5" rx="2.5" fill="#2b2b2b" stroke="#2b2b2b" stroke-width="1" /><circle cx="-4.2" cy="1" r="3" fill="#fff" stroke="#fff" stroke-width="0"/><circle cx="4.2" cy="1" r="3" fill="#fff" stroke="#fff" stroke-width="0"/><circle cx="-3.6" cy="1.4" r="1.5" fill="#2b2b2b" stroke="#2b2b2b" stroke-width="0"/><circle cx="4.8" cy="0.6" r="1.5" fill="#2b2b2b" stroke="#2b2b2b" stroke-width="0"/><path d="M-2,5.5 Q1,7.5 4,5" fill="none" stroke="#fff" stroke-width="0.9" stroke-linejoin="round" stroke-linecap="round" /><path d="M0,-4.5 V-9" fill="none" stroke="#2b2b2b" stroke-width="1.3" stroke-linejoin="round" stroke-linecap="round" /><path d="M-6,-8.5 H-2 M2,-8.5 H6 M-4,-10 V-7 M4,-10 V-7" fill="none" stroke="#777" stroke-width="1" stroke-linejoin="round" stroke-linecap="round" /></g></g><g transform="translate(1025,58.3)" ><circle cx="-4" cy="-4.5" r="4.2" fill="none" stroke="#bdbdbd" stroke-width="1.3"/><circle cx="5.5" cy="5.5" r="2.8" fill="none" stroke="#bdbdbd" stroke-width="1.3"/><path d="M-7.8,-2.5 L3,7.2 M-0.5,-7 L8,3.8" fill="none" stroke="#bdbdbd" stroke-width="1.2" stroke-linejoin="round" stroke-linecap="round" /></g><g transform="translate(1059,59)" ><g transform="rotate(-6)"><rect x="-9.5" y="-4.5" width="19" height="12.5" rx="2.5" fill="#2b2b2b" stroke="#2b2b2b" stroke-width="1" /><circle cx="-4.2" cy="1" r="3" fill="#fff" stroke="#fff" stroke-width="0"/><circle cx="4.2" cy="1" r="3" fill="#fff" stroke="#fff" stroke-width="0"/><circle cx="-3.6" cy="1.4" r="1.5" fill="#2b2b2b" stroke="#2b2b2b" stroke-width="0"/><circle cx="4.8" cy="0.6" r="1.5" fill="#2b2b2b" stroke="#2b2b2b" stroke-width="0"/><path d="M-2,5.5 Q1,7.5 4,5" fill="none" stroke="#fff" stroke-width="0.9" stroke-linejoin="round" stroke-linecap="round" /><path d="M0,-4.5 V-9" fill="none" stroke="#2b2b2b" stroke-width="1.3" stroke-linejoin="round" stroke-linecap="round" /><path d="M-6,-8.5 H-2 M2,-8.5 H6 M-4,-10 V-7 M4,-10 V-7" fill="none" stroke="#777" stroke-width="1" stroke-linejoin="round" stroke-linecap="round" /></g></g><g transform="translate(1093,58.3)" ><path d="M-9,-6.5 L-6.5,-9 H9 V6.3 L6.3,9 H-9 Z" fill="#c4c4c4" stroke="#777" stroke-width="0.9" stroke-linejoin="round" stroke-linecap="round" /><rect x="-6.3" y="-6" width="7.7" height="7.5" rx="0" fill="#9c9c9c" stroke="none" stroke-width="0" /><rect x="1.4" y="-6" width="7.4" height="7.5" rx="0" fill="#808080" stroke="none" stroke-width="0" /><rect x="-6.3" y="1.5" width="7.7" height="7.3" rx="0" fill="#868686" stroke="none" stroke-width="0" /><rect x="1.4" y="1.5" width="7.4" height="7.3" rx="0" fill="#707070" stroke="none" stroke-width="0" /><rect x="-6.3" y="-6" width="15.1" height="14.8" rx="0" fill="none" stroke="#666" stroke-width="0.8" /></g><g transform="translate(1127,58.5)" ><circle cx="0" cy="-0.5" r="6" fill="none" stroke="#4a4a4a" stroke-width="3.8"/><path d="M-9.5,9 H9.5 M-6,5 L-8,9 M6,5 L8,9" fill="none" stroke="#4a4a4a" stroke-width="2.6" stroke-linejoin="round" stroke-linecap="butt"/><path d="M-8,-8.5 L-5,-5.5 M8,-8.5 L5,-5.5" fill="none" stroke="#4a4a4a" stroke-width="2.4" stroke-linejoin="round" stroke-linecap="round" /></g><g transform="translate(1161,58.3)" ><rect x="-2" y="-10" width="4" height="5" rx="0.8" fill="#444" transform="rotate(0)"/><rect x="-2" y="-10" width="4" height="5" rx="0.8" fill="#444" transform="rotate(45)"/><rect x="-2" y="-10" width="4" height="5" rx="0.8" fill="#444" transform="rotate(90)"/><rect x="-2" y="-10" width="4" height="5" rx="0.8" fill="#444" transform="rotate(135)"/><rect x="-2" y="-10" width="4" height="5" rx="0.8" fill="#444" transform="rotate(180)"/><rect x="-2" y="-10" width="4" height="5" rx="0.8" fill="#444" transform="rotate(225)"/><rect x="-2" y="-10" width="4" height="5" rx="0.8" fill="#444" transform="rotate(270)"/><rect x="-2" y="-10" width="4" height="5" rx="0.8" fill="#444" transform="rotate(315)"/><circle cx="0" cy="0" r="5.6" fill="none" stroke="#444" stroke-width="4.2"/><circle cx="0" cy="0" r="2.6" fill="#fff" stroke="#222" stroke-width="0.8"/></g><g transform="translate(1195,58.3)" ><path d="M-7,-8 H7 L0.8,1 V4 H-0.8 V1 Z" fill="#9a9a9a" stroke="#666" stroke-width="0.9" stroke-linejoin="round" stroke-linecap="round" /><path d="M-6.5,5.2 H6.5 M-6.5,8 H6.5" fill="none" stroke="#777" stroke-width="1.8" stroke-linejoin="round" stroke-linecap="round" /></g><g transform="translate(1233,58.5)" ><path d="M-9,0 L-1,-7.5 L7.5,1 L-0.5,8.8 Z" fill="#fff" stroke="#333" stroke-width="1.3" stroke-linejoin="round" stroke-linecap="round" /><path d="M-8.5,0.8 H7.2 L-0.5,8.5 Z" fill="#555" stroke="none" stroke-width="0" stroke-linejoin="round" stroke-linecap="round" /><path d="M-6.5,-9.5 L3,0" fill="none" stroke="#333" stroke-width="1.3" stroke-linejoin="round" stroke-linecap="round" /><path d="M-3.5,-9 L1,-4.6" fill="none" stroke="#333" stroke-width="1" stroke-linejoin="round" stroke-linecap="round" /><path d="M7.5,1.5 Q10.5,5 9.6,7.2 Q8.4,9 7,7.2 Q6.2,5 7.5,1.5 Z" fill="#555" stroke="none" stroke-width="0" stroke-linejoin="round" stroke-linecap="round" /></g><g transform="translate(1301,58.3)" ><g transform="rotate(-5)"><rect x="-9.3" y="-7" width="18.6" height="14.5" rx="2.5" fill="#fff" stroke="#333" stroke-width="1.5" /><path d="M-9.3,-1.2 V-4.5 Q-9.3,-7 -6.8,-7 H6.8 Q9.3,-7 9.3,-4.5 V-1.2 Z" fill="#333" stroke="#333" stroke-width="1" stroke-linejoin="round" stroke-linecap="round" /><path d="M-5.5,-4 H5.5" fill="none" stroke="#e8e8e8" stroke-width="2.4" stroke-linejoin="round" stroke-dasharray="1.7 0.7" stroke-linecap="butt"/><path d="M-9,6.6 H9" fill="none" stroke="#333" stroke-width="2" stroke-linejoin="round" stroke-linecap="round" /></g></g><g transform="translate(1407,58.3)" ><path d="M-8.5,-5.5 L-6,-8.5 H-2.5 V2 H1.2 V-6 L3.8,-8.5 H6 Q8.8,-7 8.8,-4 V4 Q8.8,8.8 3,8.8 H-3 Q-8.5,8.8 -8.5,4 Z" fill="#fff" stroke="#333" stroke-width="1.2" stroke-linejoin="round" stroke-linecap="round" /><path d="M-6,-8.5 V4.5 Q-6,6.5 -3.5,6.5 H3 Q6,6.5 6,3.5 V-8.5" fill="none" stroke="#333" stroke-width="0.9" stroke-linejoin="round" stroke-linecap="round" /><path d="M-2.5,2 L-6,5 M1.2,2 L5.6,5.6 M-2.5,2 H1.2 L5.6,5.6 Q4.6,6.5 3,6.5 H-3.5 Q-5.4,6.4 -6,5 Z" fill="#c8c8c8" stroke="#666" stroke-width="0.6" stroke-linejoin="round" stroke-linecap="round" /><path d="M1.2,-6 V2 L5.8,5.4 V-8 Z" fill="#8c8c8c" stroke="#555" stroke-width="0.6" stroke-linejoin="round" stroke-linecap="round" /></g><g transform="translate(1441,58.3)" ><path d="M-9,4.5 L-5,0.8 H2.5 V-6.5 L5.5,-9 Q8.6,-6.5 8.6,-3 V5 Q8.6,8.8 4.5,8.8 H-4 Z" fill="#fff" stroke="#333" stroke-width="1.2" stroke-linejoin="round" stroke-linecap="round" /><path d="M-9,4.5 L-5,0.8 H2.5 L5.8,5 Q5.5,6 4,6.2 H-7 Z" fill="#c8c8c8" stroke="#666" stroke-width="0.6" stroke-linejoin="round" stroke-linecap="round" /><path d="M2.5,0.8 V-6.5 L5.5,-9 Q6.2,-8 6.2,-6 V4 Q6.2,4.8 5.8,5 Z" fill="#8c8c8c" stroke="#555" stroke-width="0.6" stroke-linejoin="round" stroke-linecap="round" /></g><g transform="translate(1475,58.3)" ><path d="M-10,1.5 L-3,-1.8 L3.5,5.5 L-3.5,8.6 Z" fill="#fff" stroke="#333" stroke-width="1.1" stroke-linejoin="round" stroke-linecap="round" /><path d="M-7.5,2 L-3,0 L1.5,5 L-3.2,7 Z" fill="#c8c8c8" stroke="#777" stroke-width="0.5" stroke-linejoin="round" stroke-linecap="round" /><path d="M-3,-1.8 L4,-8 L10,-1.5 L3.5,5.5 Z" fill="#9a9a9a" stroke="#333" stroke-width="1.1" stroke-linejoin="round" stroke-linecap="round" /><path d="M-6,-6.5 L7.5,9" fill="none" stroke="#333" stroke-width="1" stroke-linejoin="round" stroke-linecap="round" /></g><g transform="translate(1509,58.3)" ><path d="M-3.5,-8.8 H8.6 V8.8 H-8.6 V2.5 H-0.8 V-0.8 H-3.5 Q-7.8,-0.8 -7.8,-4.8 Q-7.8,-8.8 -3.5,-8.8 Z" fill="#d9d9d9" stroke="#333" stroke-width="1.3" stroke-linejoin="round" stroke-linecap="round" /><path d="M-3.5,-8.8 H1 V8.8 H-8.6 V2.5 H-0.8 V-0.8 H-3.5 Q-7.8,-0.8 -7.8,-4.8 Q-7.8,-8.8 -3.5,-8.8 Z" fill="#8c8c8c" stroke="none" stroke-width="0" stroke-linejoin="round" stroke-linecap="round" /><path d="M-0.8,-0.8 V2.5" fill="none" stroke="#333" stroke-width="1.3" stroke-linejoin="round" stroke-linecap="round" /></g><g transform="translate(1543,58.3)" ><rect x="-8" y="-8.3" width="17" height="17" rx="0" fill="#ececec" stroke="none" stroke-width="0" /><path d="M-8,-8.3 H3 Q-6.5,-6 -8,4 Z" fill="#8a8a8a" stroke="none" stroke-width="0" stroke-linejoin="round" stroke-linecap="round" /><path d="M-8,8.7 V1 Q-7,-7.5 3,-8.3 H9" fill="none" stroke="#444" stroke-width="1.3" stroke-linejoin="round" stroke-linecap="round" /></g><g transform="translate(1577,58.3)" ><path d="M-8.8,-6 L-6.5,-8.5 H0 M8.5,-2 V5 Q8.5,8.8 4,8.8 H-6 L-8.8,6 Z" fill="#fff" stroke="#333" stroke-width="1.2" stroke-linejoin="round" stroke-linecap="round" /><path d="M-6.5,-8.5 V6 H6 M-6.5,6 L-8.8,6" fill="none" stroke="#333" stroke-width="0.9" stroke-linejoin="round" stroke-linecap="round" /><path d="M0,0 L-6.5,6 M0,0 V-4 M0,0 L7.5,7.5 L8.4,3 Z" fill="#bbb" stroke="#666" stroke-width="0.7" stroke-linejoin="round" stroke-linecap="round" /><path d="M-1,-4.8 L2.5,-1.2 L9.5,-8.5" fill="none" stroke="#111" stroke-width="2.3" stroke-linejoin="round" stroke-linecap="round" /></g><g transform="translate(1611,58.3)" ><path d="M-9.5,-8 H6 Q8.5,-8 8.5,-5.5 V-1.5 H-0.5 Q-3.5,-1.5 -3.5,1 Q-3.5,4 -0.5,4 H8.5 V9 M5.5,4 V9" fill="none" stroke="#333" stroke-width="1.3" stroke-linejoin="round" stroke-linecap="round" /></g><g transform="translate(1649,58.3)" ><rect x="-9.3" y="-9.3" width="18.6" height="18.6" rx="3.5" fill="none" stroke="#222" stroke-width="1.4" stroke-dasharray="3.6 2.4"/><path d="M-3.8,0 H3.8 M0,-3.8 V3.8" fill="none" stroke="#111" stroke-width="1.8" stroke-linejoin="round" stroke-linecap="butt"/></g><g transform="translate(1687,58.5)" ><path d="M-6.8,-7 Q-8.6,-7 -8.6,-5 V-2 Q-8.6,0 -10.2,0 Q-8.6,0 -8.6,2 V6 Q-8.6,8.2 -6.8,8.2" fill="none" stroke="#444" stroke-width="1.3" stroke-linejoin="round" stroke-linecap="round" /><path d="M6.8,-2 Q8.6,-2 8.6,0 V0 Q8.6,1 9.6,1.5 Q8.6,2 8.6,3 V6 Q8.6,8.2 6.8,8.2" fill="none" stroke="#444" stroke-width="1.3" stroke-linejoin="round" stroke-linecap="round" /><g transform="translate(-0.5,2.4) scale(0.62)"><path d="M0,-9 L8,-4.8 V4.6 L0,9 L-8,4.6 V-4.8 Z" fill="#fff" stroke="#444" stroke-width="1.3" stroke-linejoin="round" stroke-linecap="round" /><path d="M0,0 L8,-4.8 V4.6 L0,9 Z" fill="#fff" stroke="#444" stroke-width="1" stroke-linejoin="round" stroke-linecap="round" /><path d="M0,0 L-8,-4.8 V4.6 L0,9 Z" fill="#fff" stroke="#444" stroke-width="1" stroke-linejoin="round" stroke-linecap="round" /><path d="M0,-9 L8,-4.8 L0,0 L-8,-4.8 Z" fill="#fff" stroke="#444" stroke-width="1" stroke-linejoin="round" stroke-linecap="round" /></g><circle cx="5.2" cy="-5.6" r="2.3" fill="#222" stroke="none" stroke-width="0"/><path d="M5.2,-9.5 V-1.5" fill="none" stroke="#222" stroke-width="1.1" stroke-linejoin="round" stroke-linecap="round" /></g><g transform="translate(1707,58.5)" ><path d="M-4.4,-2.2 L0,2.2 L4.4,-2.2" fill="none" stroke="#333" stroke-width="1.8" stroke-linecap="round" stroke-linejoin="round"/></g><g transform="translate(16.2,92.8)" ><circle cx="0" cy="0" r="2.9" fill="#222" stroke="#222" stroke-width="0"/><path d="M0,-8.8 V9" fill="none" stroke="#222" stroke-width="1.8" stroke-dasharray="1.25 1" shape-rendering="crispEdges"/><path d="M5.6,5.3 H12.6 M9.1,1.8 V8.8" fill="none" stroke="#1a56b0" stroke-width="1.8" stroke-linejoin="round" stroke-linecap="butt"/></g><g transform="translate(20,127.5)" ><ellipse cx="0" cy="-1.5" rx="9.6" ry="6.6" fill="#222" stroke="none" stroke-width="0" /><path d="M-4,3 L-8,8.3 L1,4.6 Z" fill="#222" stroke="none" stroke-width="0" stroke-linejoin="round" stroke-linecap="round" /></g><g transform="translate(20,163)" ><path d="M4,-8 H-5 Q-7,-8 -7,-6 V6.5 Q-7,8.5 -5,8.5 H3.5 Q5.5,8.5 5.5,6.5 V2" fill="none" stroke="#222" stroke-width="1.6" stroke-linejoin="round" stroke-linecap="round" /><path d="M-4,-3.8 H2 M-4,-0.2 H0.5 M-4,3.4 H-1" fill="none" stroke="#222" stroke-width="1.4" stroke-linejoin="round" stroke-linecap="round" /><path d="M1,3.8 L2,0.5 L7.3,-5.6 L9.4,-3.6 L4,2.6 Z" fill="#222" stroke="#222" stroke-width="0.6" stroke-linejoin="round" stroke-linecap="round" /></g><g transform="translate(21.5,198)" ><circle cx="0" cy="1.5" r="6.3" fill="none" stroke="#222" stroke-width="1.6"/><path d="M-2.3,-8 H2.3 M0,-8 V-5 M0,1.5 L2.6,-1.4 M4.8,-4.5 L6,-5.8" fill="none" stroke="#222" stroke-width="1.6" stroke-linejoin="round" stroke-linecap="round" /><path d="M-9.3,-1.6 H-6 M-10.3,1.4 H-6.6 M-9.3,4.4 H-6" fill="none" stroke="#222" stroke-width="1.3" stroke-linejoin="round" stroke-linecap="round" /></g><g transform="translate(20,233.7)" ><rect x="-7.3" y="-8.3" width="14.6" height="16.6" rx="1.5" fill="none" stroke="#222" stroke-width="1.6" /><path d="M-4.8,-4.6 L-3.6,-3.4 L-1.8,-5.8 M-4.8,0.2 L-3.6,1.4 L-1.8,-1 M-4.8,4.8 L-3.6,6 L-1.8,3.6" fill="none" stroke="#222" stroke-width="1" stroke-linejoin="round" stroke-linecap="round" /><path d="M0.5,-4.4 H4.8 M0.5,0.4 H4.8 M0.5,5 H4.8" fill="none" stroke="#222" stroke-width="1.4" stroke-linejoin="round" stroke-linecap="round" /></g><g transform="translate(0,0)" ><rect x="11" y="1059" width="18" height="8" rx="0" fill="#2b2b2b" stroke="none" stroke-width="0" /><circle cx="21.6" cy="1066.9" r="5.6" fill="#fafafa" stroke="none" stroke-width="0"/><circle cx="21.6" cy="1066.9" r="3.7" fill="#fafafa" stroke="#222" stroke-width="1.7"/><path d="M24.4,1069.8 L28.2,1073" fill="none" stroke="#222" stroke-width="2.2" stroke-linejoin="round" stroke-linecap="round" /></g><g transform="translate(58.4,100.5)" ><path d="M-7.2,-7 H7.2 L1.3,0.5 V7 L-1.3,4.8 V0.5 Z" fill="none" stroke="#222" stroke-width="1.4" stroke-linejoin="round" stroke-linecap="round" /></g><g transform="translate(155,130)" ><path d="M-8.8,-6.5 H-3 L-1.2,-4.2 H9 V6.5 H-1" fill="none" stroke="#b0b0b0" stroke-width="1.1" stroke-linejoin="round" stroke-linecap="round" /><path d="M-8.8,-6.5 V-3 M-8.8,5 V6.5 H-7" fill="none" stroke="#b0b0b0" stroke-width="1.1" stroke-linejoin="round" stroke-linecap="round" /><path d="M-8.4,1.9 H0 M-4.2,-2.3 V6.1" fill="none" stroke="#6f8fd6" stroke-width="1.8" stroke-linejoin="round" stroke-linecap="butt"/></g><g transform="translate(184.5,130)" ><rect x="-5.8" y="-6.7" width="3.6" height="13.4" rx="0" fill="#a3a3a3" stroke="none" stroke-width="0" /><rect x="2.2" y="-6.7" width="3.6" height="13.4" rx="0" fill="#a3a3a3" stroke="none" stroke-width="0" /></g><g transform="translate(215,130)" ><circle cx="0" cy="1.2" r="7" fill="none" stroke="#222" stroke-width="1.7"/><path d="M-2.5,-8.5 H2.5 M0,-8.5 V-6 M0,1.2 L3,4.5 M5.5,-5.5 L7,-7" fill="none" stroke="#222" stroke-width="1.7" stroke-linejoin="round" stroke-linecap="round" /></g><g transform="translate(50,157.5)" ><path d="M-4.6,-2.3 L0,2.3 L4.6,-2.3" fill="none" stroke="#444" stroke-width="2.1" stroke-linecap="round" stroke-linejoin="round"/></g><g transform="translate(50,313.5)" ><path d="M-4.6,-2.3 L0,2.3 L4.6,-2.3" fill="none" stroke="#444" stroke-width="2.1" stroke-linecap="round" stroke-linejoin="round"/></g><g transform="translate(50,721.5)" ><path d="M-4.6,-2.3 L0,2.3 L4.6,-2.3" fill="none" stroke="#444" stroke-width="2.1" stroke-linecap="round" stroke-linejoin="round"/></g><g transform="translate(49.8,287)" ><path d="M-2.3,-4.6 L2.3,0 L-2.3,4.6" fill="none" stroke="#444" stroke-width="2.1" stroke-linecap="round" stroke-linejoin="round"/></g><g transform="translate(49.8,495)" ><path d="M-2.3,-4.6 L2.3,0 L-2.3,4.6" fill="none" stroke="#444" stroke-width="2.1" stroke-linecap="round" stroke-linejoin="round"/></g><g transform="translate(49.8,599)" ><path d="M-2.3,-4.6 L2.3,0 L-2.3,4.6" fill="none" stroke="#444" stroke-width="2.1" stroke-linecap="round" stroke-linejoin="round"/></g><g transform="translate(72.3,183)" ><circle cx="0" cy="0" r="3.3" fill="none" stroke="#666" stroke-width="0.9"/><circle cx="0" cy="0" r="1.5" fill="#555" stroke="none" stroke-width="0"/></g><g transform="translate(72.7,209)" ><g transform="scale(0.84)"><path d="M-8,-7 L7.5,-5.5 V8 L-8,6 Z" fill="#e9e9e9" stroke="#bdbdbd" stroke-width="1.4" stroke-linejoin="round" stroke-linecap="round" /><path d="M-1,-6.3 V0.5 L7.5,1.5" fill="none" stroke="#bdbdbd" stroke-width="1.4" stroke-linejoin="round" stroke-linecap="round" /></g></g><g transform="translate(72.7,235)" ><g transform="scale(0.84)"><path d="M-8,-7 L7.5,-5.5 V8 L-8,6 Z" fill="#e9e9e9" stroke="#bdbdbd" stroke-width="1.4" stroke-linejoin="round" stroke-linecap="round" /><path d="M-1,-6.3 V0.5 L7.5,1.5" fill="none" stroke="#bdbdbd" stroke-width="1.4" stroke-linejoin="round" stroke-linecap="round" /></g></g><g transform="translate(72.7,261)" ><g transform="scale(0.84)"><path d="M-8,-7 L7.5,-5.5 V8 L-8,6 Z" fill="#e9e9e9" stroke="#bdbdbd" stroke-width="1.4" stroke-linejoin="round" stroke-linecap="round" /><path d="M-1,-6.3 V0.5 L7.5,1.5" fill="none" stroke="#bdbdbd" stroke-width="1.4" stroke-linejoin="round" stroke-linecap="round" /></g></g><g transform="translate(73.2,287)" ><g transform="scale(0.88)"><path d="M0,-9 L8,-4.8 V4.6 L0,9 L-8,4.6 V-4.8 Z" fill="#fff" stroke="#b5b5b5" stroke-width="1.3" stroke-linejoin="round" stroke-linecap="round" /><path d="M0,0 L8,-4.8 V4.6 L0,9 Z" fill="#fff" stroke="#b5b5b5" stroke-width="1" stroke-linejoin="round" stroke-linecap="round" /><path d="M0,0 L-8,-4.8 V4.6 L0,9 Z" fill="#fff" stroke="#b5b5b5" stroke-width="1" stroke-linejoin="round" stroke-linecap="round" /><path d="M0,-9 L8,-4.8 L0,0 L-8,-4.8 Z" fill="#fff" stroke="#b5b5b5" stroke-width="1" stroke-linejoin="round" stroke-linecap="round" /></g></g><g transform="translate(73.4,313.3)" ><g transform="scale(0.82)"><path d="M-8.5,-6 H-2.5 L-0.8,-3.8 H8.5 V6.5 H-8.5 Z" fill="none" stroke="#444" stroke-width="1.5" stroke-linejoin="round" stroke-linecap="round" /></g></g><g transform="translate(73.4,495.3)" ><g transform="scale(0.82)"><path d="M-8.5,-6 H-2.5 L-0.8,-3.8 H8.5 V6.5 H-8.5 Z" fill="none" stroke="#444" stroke-width="1.5" stroke-linejoin="round" stroke-linecap="round" /></g></g><g transform="translate(73.4,599.3)" ><g transform="scale(0.82)"><path d="M-8.5,-6 H-2.5 L-0.8,-3.8 H8.5 V6.5 H-8.5 Z" fill="none" stroke="#444" stroke-width="1.5" stroke-linejoin="round" stroke-linecap="round" /></g></g><g transform="translate(72.7,339)" ><g transform="scale(0.84)"><path d="M-5.5,6 L-3.8,1.6 L4.2,-7.6 L7.4,-4.8 L-0.8,4.6 Z M-3.8,1.6 L-0.8,4.6" fill="none" stroke="#b0b0b0" stroke-width="1.2" stroke-linejoin="round" stroke-linecap="round" /><path d="M-9,8.4 H9" fill="none" stroke="#b0b0b0" stroke-width="1.3" stroke-linejoin="round" stroke-linecap="round" /></g></g><g transform="translate(72.7,417)" ><g transform="scale(0.84)"><path d="M-5.5,6 L-3.8,1.6 L4.2,-7.6 L7.4,-4.8 L-0.8,4.6 Z M-3.8,1.6 L-0.8,4.6" fill="none" stroke="#b0b0b0" stroke-width="1.2" stroke-linejoin="round" stroke-linecap="round" /><path d="M-9,8.4 H9" fill="none" stroke="#b0b0b0" stroke-width="1.3" stroke-linejoin="round" stroke-linecap="round" /></g></g><g transform="translate(53.8,469)" ><g transform="scale(0.8)"><path d="M-5.5,6 L-3.8,1.6 L4.2,-7.6 L7.4,-4.8 L-0.8,4.6 Z M-3.8,1.6 L-0.8,4.6" fill="none" stroke="#b0b0b0" stroke-width="1.2" stroke-linejoin="round" stroke-linecap="round" /><path d="M-9,8.4 H9" fill="none" stroke="#b0b0b0" stroke-width="1.3" stroke-linejoin="round" stroke-linecap="round" /></g></g><g transform="translate(72.7,364.6)" ><g transform="scale(0.84)"><path d="M-9,-6.5 L-6.5,-9 H9 V6.3 L6.3,9 H-9 Z" fill="#c4c4c4" stroke="#777" stroke-width="0.9" stroke-linejoin="round" stroke-linecap="round" /><rect x="-6.3" y="-6" width="7.7" height="7.5" rx="0" fill="#9c9c9c" stroke="none" stroke-width="0" /><rect x="1.4" y="-6" width="7.4" height="7.5" rx="0" fill="#808080" stroke="none" stroke-width="0" /><rect x="-6.3" y="1.5" width="7.7" height="7.3" rx="0" fill="#868686" stroke="none" stroke-width="0" /><rect x="1.4" y="1.5" width="7.4" height="7.3" rx="0" fill="#707070" stroke="none" stroke-width="0" /><rect x="-6.3" y="-6" width="15.1" height="14.8" rx="0" fill="none" stroke="#666" stroke-width="0.8" /></g></g><g transform="translate(72.7,443)" ><g transform="scale(0.84)"><path d="M-9,-6.5 L-6.5,-9 H7 Q9,-9 9,-7 V6 L6.5,8.8 H-9 Z" fill="#fff" stroke="#aaa" stroke-width="1.4" stroke-linejoin="round" stroke-linecap="round" /><path d="M-9,-6.5 H6.5 V8.8 M6.5,-6.5 L9,-9" fill="none" stroke="#aaa" stroke-width="1" stroke-linejoin="round" stroke-linecap="round" /><rect x="-4" y="-2" width="11" height="10.8" rx="0" fill="#c4c4c4" stroke="#aaa" stroke-width="1" /><path d="M-4,-2 L-2,-0.2 H7 M-2,-0.2 V8.8" fill="none" stroke="#aaa" stroke-width="0.7" stroke-linejoin="round" stroke-linecap="round" /></g></g><g transform="translate(72.7,391)" ><path d="M-7.5,-5.5 L-5,-7.5 H5 L7.5,-5 V5.5 L5.5,7.5 H-5 L-7.5,5.5 Z" fill="#fff" stroke="#1d3a55" stroke-width="1.3" stroke-linejoin="round" stroke-linecap="round" /><path d="M-1,-5 L1.5,-7.3 H5 L7.3,-5 V5.3 L5.3,7.3 H-1 Z" fill="#8a94a6" stroke="none" stroke-width="0" stroke-linejoin="round" stroke-linecap="round" /><path d="M-7.5,-5.5 L-1,-5 V7.5 M-1,-5 L1.5,-7.5" fill="none" stroke="#1d3a55" stroke-width="1" stroke-linejoin="round" stroke-linecap="round" /><ellipse cx="-5.2" cy="-2.4" rx="1.1" ry="1.5" fill="#222" stroke="none" stroke-width="0" /><ellipse cx="-5.2" cy="2.8" rx="1.1" ry="1.5" fill="#222" stroke="none" stroke-width="0" /><ellipse cx="-2.8" cy="-2" rx="1" ry="1.5" fill="#222" stroke="none" stroke-width="0" /><ellipse cx="-2.8" cy="3.2" rx="1" ry="1.5" fill="#222" stroke="none" stroke-width="0" /><path d="M2,-2 L4.5,-3.5 V2 L2,3.5 Z" fill="#b4bccb" stroke="none" stroke-width="0" stroke-linejoin="round" stroke-linecap="round" /></g><g transform="translate(53.2,520.5)" ><g transform="scale(0.72)"><circle cx="-4" cy="-4.5" r="4.2" fill="none" stroke="#c8c8c8" stroke-width="1.3"/><circle cx="5.5" cy="5.5" r="2.8" fill="none" stroke="#c8c8c8" stroke-width="1.3"/><path d="M-7.8,-2.5 L3,7.2 M-0.5,-7 L8,3.8" fill="none" stroke="#c8c8c8" stroke-width="1.2" stroke-linejoin="round" stroke-linecap="round" /></g></g><g transform="translate(54,547.5)" ><g transform="scale(0.8)"><g transform="rotate(-6)"><rect x="-9.5" y="-4.5" width="19" height="12.5" rx="2.5" fill="#9a9a9a" stroke="#9a9a9a" stroke-width="1" /><circle cx="-4.2" cy="1" r="3" fill="#fff" stroke="#fff" stroke-width="0"/><circle cx="4.2" cy="1" r="3" fill="#fff" stroke="#fff" stroke-width="0"/><circle cx="-3.6" cy="1.4" r="1.5" fill="#9a9a9a" stroke="#9a9a9a" stroke-width="0"/><circle cx="4.8" cy="0.6" r="1.5" fill="#9a9a9a" stroke="#9a9a9a" stroke-width="0"/><path d="M-2,5.5 Q1,7.5 4,5" fill="none" stroke="#fff" stroke-width="0.9" stroke-linejoin="round" stroke-linecap="round" /><path d="M0,-4.5 V-9" fill="none" stroke="#9a9a9a" stroke-width="1.3" stroke-linejoin="round" stroke-linecap="round" /><path d="M-6,-8.5 H-2 M2,-8.5 H6 M-4,-10 V-7 M4,-10 V-7" fill="none" stroke="#777" stroke-width="1" stroke-linejoin="round" stroke-linecap="round" /></g></g></g><g transform="translate(54,573.5)" ><g transform="scale(0.8)"><g transform="rotate(-6)"><rect x="-9.5" y="-4.5" width="19" height="12.5" rx="2.5" fill="#9a9a9a" stroke="#9a9a9a" stroke-width="1" /><circle cx="-4.2" cy="1" r="3" fill="#fff" stroke="#fff" stroke-width="0"/><circle cx="4.2" cy="1" r="3" fill="#fff" stroke="#fff" stroke-width="0"/><circle cx="-3.6" cy="1.4" r="1.5" fill="#9a9a9a" stroke="#9a9a9a" stroke-width="0"/><circle cx="4.8" cy="0.6" r="1.5" fill="#9a9a9a" stroke="#9a9a9a" stroke-width="0"/><path d="M-2,5.5 Q1,7.5 4,5" fill="none" stroke="#fff" stroke-width="0.9" stroke-linejoin="round" stroke-linecap="round" /><path d="M0,-4.5 V-9" fill="none" stroke="#9a9a9a" stroke-width="1.3" stroke-linejoin="round" stroke-linecap="round" /><path d="M-6,-8.5 H-2 M2,-8.5 H6 M-4,-10 V-7 M4,-10 V-7" fill="none" stroke="#777" stroke-width="1" stroke-linejoin="round" stroke-linecap="round" /></g></g></g><g transform="translate(200,286)" ><circle cx="0" cy="0" r="2.9" fill="#222" stroke="#222" stroke-width="0"/><path d="M0,-8.8 V9" fill="none" stroke="#222" stroke-width="1.8" stroke-dasharray="1.25 1" shape-rendering="crispEdges"/></g><g transform="translate(200,364)" ><circle cx="0" cy="0" r="2.9" fill="#222" stroke="#222" stroke-width="0"/><path d="M0,-8.8 V9" fill="none" stroke="#222" stroke-width="1.8" stroke-dasharray="1.25 1" shape-rendering="crispEdges"/></g><g transform="translate(200,390)" ><circle cx="0" cy="0" r="2.9" fill="#222" stroke="#222" stroke-width="0"/><path d="M0,-8.8 V9" fill="none" stroke="#222" stroke-width="1.8" stroke-dasharray="1.25 1" shape-rendering="crispEdges"/></g><g transform="translate(200,520)" ><circle cx="0" cy="0" r="2.9" fill="#222" stroke="#222" stroke-width="0"/><path d="M0,-8.8 V9" fill="none" stroke="#222" stroke-width="1.8" stroke-dasharray="1.25 1" shape-rendering="crispEdges"/></g><g transform="translate(200,546)" ><circle cx="0" cy="0" r="2.9" fill="#222" stroke="#222" stroke-width="0"/><path d="M0,-8.8 V9" fill="none" stroke="#222" stroke-width="1.8" stroke-dasharray="1.25 1" shape-rendering="crispEdges"/></g><g transform="translate(200,572)" ><circle cx="0" cy="0" r="2.9" fill="#222" stroke="#222" stroke-width="0"/><path d="M0,-8.8 V9" fill="none" stroke="#222" stroke-width="1.8" stroke-dasharray="1.25 1" shape-rendering="crispEdges"/></g><g transform="translate(72.7,747.5)" ><g transform="scale(0.86)"><path d="M-8,1 L-4.5,-1 V-6.5 L-1,-8.5 H3.5 L7,-6.5 V5.5 L3,8 H-5.5 L-8,6 Z" fill="#fff" stroke="#bbb" stroke-width="1.4" stroke-linejoin="round" stroke-linecap="round" /><path d="M-4.5,-1 L-1,1.5 V-4.8 L-4.5,-6.5 M-1,-4.8 L3.5,-4.8 L7,-6.5 M3.5,-4.8 V5 L7,5.5 M-8,1 L-4,3.6 H3.2" fill="none" stroke="#bbb" stroke-width="0.9" stroke-linejoin="round" stroke-linecap="round" /></g></g><g transform="translate(72.7,773.5)" ><g transform="scale(0.86)"><path d="M-8,1 L-4.5,-1 V-6.5 L-1,-8.5 H3.5 L7,-6.5 V5.5 L3,8 H-5.5 L-8,6 Z" fill="#fff" stroke="#333" stroke-width="1.4" stroke-linejoin="round" stroke-linecap="round" /><path d="M-4.5,-1 L-1,1.5 V-4.8 L-4.5,-6.5 M-1,-4.8 L3.5,-4.8 L7,-6.5 M3.5,-4.8 V5 L7,5.5 M-8,1 L-4,3.6 H3.2" fill="none" stroke="#333" stroke-width="0.9" stroke-linejoin="round" stroke-linecap="round" /></g></g><g transform="translate(72.7,799.5)" ><g transform="scale(0.86)"><path d="M-8,1 L-4.5,-1 V-6.5 L-1,-8.5 H3.5 L7,-6.5 V5.5 L3,8 H-5.5 L-8,6 Z" fill="#fff" stroke="#333" stroke-width="1.4" stroke-linejoin="round" stroke-linecap="round" /><path d="M-4.5,-1 L-1,1.5 V-4.8 L-4.5,-6.5 M-1,-4.8 L3.5,-4.8 L7,-6.5 M3.5,-4.8 V5 L7,5.5 M-8,1 L-4,3.6 H3.2" fill="none" stroke="#333" stroke-width="0.9" stroke-linejoin="round" stroke-linecap="round" /></g></g><g transform="translate(72.7,825.5)" ><g transform="scale(0.86)"><path d="M-8,1 L-4.5,-1 V-6.5 L-1,-8.5 H3.5 L7,-6.5 V5.5 L3,8 H-5.5 L-8,6 Z" fill="#fff" stroke="#333" stroke-width="1.4" stroke-linejoin="round" stroke-linecap="round" /><path d="M-4.5,-1 L-1,1.5 V-4.8 L-4.5,-6.5 M-1,-4.8 L3.5,-4.8 L7,-6.5 M3.5,-4.8 V5 L7,5.5 M-8,1 L-4,3.6 H3.2" fill="none" stroke="#333" stroke-width="0.9" stroke-linejoin="round" stroke-linecap="round" /></g></g><g transform="translate(0,0)" ><path d="M252.3,547.6 L254.9,550.2 L257.5,547.6" fill="none" stroke="#444" stroke-width="1.3" stroke-linejoin="round" stroke-linecap="round" /><path d="M255,552.3 V564.7" fill="none" stroke="#888" stroke-width="1.9" stroke-linejoin="round" stroke-linecap="butt"/><path d="M260.2,548.5 H270 M257.3,553.5 H270 M257.3,558.5 H270 M257.3,563.5 H270" fill="none" stroke="#333" stroke-width="1.2" stroke-linejoin="round" stroke-linecap="butt"/></g><g transform="translate(561,93.5)" ><path d="M-6.5,0 L-2.3,4.6 L6.5,-5" fill="none" stroke="#fff" stroke-width="2.8" stroke-linecap="butt" stroke-linejoin="miter"/></g><g transform="translate(589,94)" ><path d="M-4.7,-4.9 L4.7,4.9 M4.7,-4.9 L-4.7,4.9" fill="none" stroke="#c1272d" stroke-width="3" stroke-linejoin="round" stroke-linecap="butt"/></g><g transform="translate(584,145.3)" ><path d="M-3.4,-3.4 L3.4,3.4 M3.4,-3.4 L-3.4,3.4" fill="none" stroke="#555" stroke-width="1" stroke-linejoin="round" stroke-linecap="butt"/></g><g transform="translate(584,169.3)" ><path d="M-3.4,-3.4 L3.4,3.4 M3.4,-3.4 L-3.4,3.4" fill="none" stroke="#555" stroke-width="1" stroke-linejoin="round" stroke-linecap="butt"/></g><g transform="translate(584,193.3)" ><path d="M-3.4,-3.4 L3.4,3.4 M3.4,-3.4 L-3.4,3.4" fill="none" stroke="#555" stroke-width="1" stroke-linejoin="round" stroke-linecap="butt"/></g><g transform="translate(332,250.2)" ><path d="M-3.3,0.2 L-1.1,2.6 L3.5,-2.8" fill="none" stroke="#fff" stroke-width="2" stroke-linejoin="round" stroke-linecap="round" /></g><g transform="translate(332,400.2)" ><path d="M-3.3,0.2 L-1.1,2.6 L3.5,-2.8" fill="none" stroke="#fff" stroke-width="2" stroke-linejoin="round" stroke-linecap="round" /></g><g transform="translate(567,343.3)" ><path d="M-3.8,-1.9 H3.8 L0,2.2 Z" fill="#222"/></g><g transform="translate(567,371.3)" ><path d="M-3.8,-1.9 H3.8 L0,2.2 Z" fill="#222"/></g><g transform="translate(567,504.3)" ><path d="M-3.8,-1.9 H3.8 L0,2.2 Z" fill="#222"/></g><g transform="translate(56.5,1064.2)" ><path d="M-7.7,0 H7.7 M0,-7.5 V7.5" fill="none" stroke="#555" stroke-width="2.8" stroke-linejoin="round" stroke-linecap="butt"/></g><g transform="translate(0,0)" ><path d="M82.8,1063.8 L92,1053 L96.3,1058 V1054.2 H99 V1061.2 L101.2,1063.8 V1071 H94.3 V1065.3 H89.7 V1071 H82.8 Z" fill="#555" stroke="none" stroke-width="0" stroke-linejoin="round" stroke-linecap="round" /></g><g transform="translate(135,1062.3)" ><path d="M-8.5,-6 H-2.5 L-0.8,-3.8 H8.5 V6.5 H-8.5 Z" fill="none" stroke="#444" stroke-width="1.1" stroke-linejoin="round" stroke-linecap="round" /></g><g transform="translate(255.8,1062.5)" ><circle cx="0" cy="0" r="6.8" fill="#6f9ad8" stroke="none" stroke-width="0"/><path d="M0,-0.6 V3.8" fill="none" stroke="#fff" stroke-width="2.2" stroke-linejoin="round" stroke-linecap="butt"/><circle cx="0" cy="-3.4" r="1.3" fill="#fff" stroke="none" stroke-width="0"/></g><g transform="translate(276,1063)" ><path d="M-8,-5.5 L-5.5,-8 H8 V5.5 L5.5,8 H-8 Z" fill="#fff" stroke="#333" stroke-width="1.2" stroke-linejoin="round" stroke-linecap="round" /><path d="M-8,-5.5 H5.5 V8 M5.5,-5.5 L8,-8" fill="none" stroke="#333" stroke-width="0.9" stroke-linejoin="round" stroke-linecap="round" /><rect x="-4.5" y="-3" width="9.5" height="10.5" rx="0" fill="#8c8c8c" stroke="#444" stroke-width="0.8" /></g><g transform="translate(458,1063.3)" ><path d="M-8,-3 L-5.5,-5 H-1.5 V8 H-8 Z" fill="#fff" stroke="#333" stroke-width="1.2" stroke-linejoin="round" stroke-linecap="round" /><path d="M-1.5,-6.5 L1,-8.5 H6 Q8,-8.5 8,-6.5 V6 L5.5,8 H-1.5 Z" fill="#fff" stroke="#333" stroke-width="1.2" stroke-linejoin="round" stroke-linecap="round" /><path d="M-5.5,-5 V8 M1,-8.5 V8" fill="none" stroke="#333" stroke-width="0.8" stroke-linejoin="round" stroke-linecap="round" /></g><g transform="translate(1830,96.5)" ><path d="M-7,4 H7 L0,-6 Z" fill="#999"/></g><g transform="translate(1830,236)" ><path d="M-7,-4 H7 L0,6 Z" fill="#999"/></g><g transform="translate(1760.5,166)" ><path d="M4.5,-7 V7 L-5.5,0 Z" fill="#999"/></g><g transform="translate(1900,166)" ><path d="M-4.5,-7 V7 L5.5,0 Z" fill="#999"/></g><g transform="translate(0,0)" ><path d="M1808,101 Q1788,107 1780,121" fill="none" stroke="#999" stroke-width="5" stroke-linejoin="round" stroke-linecap="butt"/><path d="M1775.5,113 L1787,124 L1776,125 Z" fill="#999" stroke="#999" stroke-width="1"/><path d="M1852,101 Q1872,107 1880,121" fill="none" stroke="#999" stroke-width="5" stroke-linejoin="round" stroke-linecap="butt"/><path d="M1884.5,113 L1873,124 L1884,125 Z" fill="#999" stroke="#999" stroke-width="1"/></g><g transform="translate(0,0)" ><path d="M1790.6,148.9 L1793.3,141.1 L1822.2,125 Q1826.5,123.4 1831.1,123.9 L1864.4,134.4 Q1869,136.5 1869.4,141.1 L1868.3,188.9 Q1867.5,192.5 1864.4,194.4 L1842.2,208.3 Q1837,210.2 1832.2,208.3 L1794.4,194.4 Q1791,192.5 1790.6,187.8 Z" fill="#dde5e9" stroke="#e6ecef" stroke-width="1.2" stroke-linejoin="round" stroke-linecap="round" /><path d="M1803.9,143.9 L1826.7,126.6 L1857.8,135.8 L1837.8,153.3 Z" fill="#f7f9fa" stroke="#f7f9fa" stroke-width="3" stroke-linejoin="round" stroke-linecap="round" /><path d="M1797.5,153.5 L1831.8,163 L1830.5,196 L1799,187.5 Z" fill="#f7f9fa" stroke="#f7f9fa" stroke-width="3.5" stroke-linejoin="round" stroke-linecap="round" /><path d="M1845,163.2 L1863.8,148 L1862.5,184 L1846,199 Z" fill="#f7f9fa" stroke="#f7f9fa" stroke-width="3" stroke-linejoin="round" stroke-linecap="round" /><circle cx="1838.5" cy="158.5" r="3.2" fill="#f7f9fa" stroke="none" stroke-width="0"/><circle cx="1796.5" cy="146.5" r="2.6" fill="#f7f9fa" stroke="none" stroke-width="0"/><circle cx="1866" cy="141" r="2.2" fill="#f7f9fa" stroke="none" stroke-width="0"/><circle cx="1838" cy="204.5" r="2.6" fill="#f7f9fa" stroke="none" stroke-width="0"/></g><g transform="translate(0,0)" ><path d="M1818.9,128 V172.2" fill="none" stroke="#a3a8e6" stroke-width="1.1" stroke-linejoin="round" stroke-linecap="round" /><path d="M1818.9,120.6 V128.6" fill="none" stroke="#4a50b0" stroke-width="2" stroke-linejoin="round" stroke-linecap="butt"/><path d="M1818.9,172.2 L1862,184" fill="none" stroke="#a9d8ae" stroke-width="1" stroke-linejoin="round" stroke-linecap="round" /><path d="M1862.5,184.2 L1869.4,186.1" fill="none" stroke="#3d9a48" stroke-width="1.3" stroke-linejoin="round" stroke-linecap="round" /><path d="M1817.8,172.4 L1808,181.5" fill="none" stroke="#e7a9a9" stroke-width="1" stroke-linejoin="round" stroke-linecap="round" /><path d="M1807.8,181.7 L1790,196.1" fill="none" stroke="#cf2a2a" stroke-width="1.2" stroke-linejoin="round" stroke-linecap="round" /></g><g transform="translate(0,0)" ><text transform="translate(1818.6,115.2)  scale(0.8,1)" text-anchor="middle" font-family="Liberation Sans, sans-serif" font-size="13.2" font-weight="400" fill="#5a62cc">Z</text><text transform="translate(1878.3,192.6)  scale(0.82,1)" text-anchor="middle" font-family="Liberation Sans, sans-serif" font-size="13.6" font-weight="400" fill="#2e9a3c">Y</text><text transform="translate(1784.2,205.6)  scale(0.82,1)" text-anchor="middle" font-family="Liberation Sans, sans-serif" font-size="14" font-weight="400" fill="#cc2222">X</text><text transform="translate(1815.2,181.8) skewY(15) scale(0.8,1)" text-anchor="middle" font-family="Liberation Sans, sans-serif" font-size="12.3" font-weight="400" fill="#1a1a1a">Right</text><text transform="translate(1856.5,176.5) rotate(-8) skewY(-33) scale(0.72,1)" text-anchor="middle" font-family="Liberation Sans, sans-serif" font-size="10.5" font-weight="400" fill="#333">Back</text><text transform="translate(1831.5,137.6) rotate(157) scale(0.92,1)" text-anchor="middle" font-family="Liberation Sans, sans-serif" font-size="9.3" font-weight="400" fill="#333">Top</text></g><g transform="translate(1875,232)" ><g transform="scale(0.95)"><path d="M0,-9 L8,-4.8 V4.6 L0,9 L-8,4.6 V-4.8 Z" fill="#f0f0f0" stroke="#333" stroke-width="1.3" stroke-linejoin="round" stroke-linecap="round" /><path d="M0,0 L8,-4.8 V4.6 L0,9 Z" fill="#f4f4f4" stroke="#333" stroke-width="1" stroke-linejoin="round" stroke-linecap="round" /><path d="M0,0 L-8,-4.8 V4.6 L0,9 Z" fill="#a2a2a2" stroke="#333" stroke-width="1" stroke-linejoin="round" stroke-linecap="round" /><path d="M0,-9 L8,-4.8 L0,0 L-8,-4.8 Z" fill="#f0f0f0" stroke="#333" stroke-width="1" stroke-linejoin="round" stroke-linecap="round" /></g></g><g transform="translate(1896,232)" ><path d="M-3.8,-1.9 H3.8 L0,2.2 Z" fill="#222"/></g><g transform="translate(1905,450)" ><path d="M-8.5,3.5 L-2,-9.5 L4,-6 L-1,3.5 Z" fill="#8d8d8d" stroke="none" stroke-width="0" stroke-linejoin="round" stroke-linecap="round" /><path d="M-1.5,-9 L9,-1.5 L5,3.5 H-1 Z" fill="#b5b5b5" stroke="none" stroke-width="0" stroke-linejoin="round" stroke-linecap="round" /><rect x="-9.5" y="3.2" width="19.5" height="6" rx="2" fill="#dedede" stroke="#9a9a9a" stroke-width="0.9" /><rect x="-9.5" y="3.2" width="8" height="6" rx="2" fill="#aaa" stroke="#8a8a8a" stroke-width="0.9" /><circle cx="-6.6" cy="6.2" r="1.2" fill="#fff" stroke="none" stroke-width="0"/></g><g transform="translate(1905,483)" ><g transform="scale(1.12)"><g transform="translate(1.5,2.5) scale(0.72)"><path d="M0,-9 L8,-4.8 V4.6 L0,9 L-8,4.6 V-4.8 Z" fill="#fff" stroke="#222" stroke-width="1.3" stroke-linejoin="round" stroke-linecap="round" /><path d="M0,0 L8,-4.8 V4.6 L0,9 Z" fill="#fff" stroke="#222" stroke-width="1" stroke-linejoin="round" stroke-linecap="round" /><path d="M0,0 L-8,-4.8 V4.6 L0,9 Z" fill="#fff" stroke="#222" stroke-width="1" stroke-linejoin="round" stroke-linecap="round" /><path d="M0,-9 L8,-4.8 L0,0 L-8,-4.8 Z" fill="#fff" stroke="#222" stroke-width="1" stroke-linejoin="round" stroke-linecap="round" /></g><rect x="-9" y="-9.5" width="8.5" height="7.5" rx="0" fill="#1a56b0" stroke="none" stroke-width="0" /><path d="M-9,-7 H-0.5 M-9,-4.5 H-0.5 M-6.2,-9.5 V-2 M-3.4,-9.5 V-2" fill="none" stroke="#fff" stroke-width="0.7" stroke-linejoin="round" stroke-linecap="round" /></g></g><g transform="translate(1905,516)" ><g transform="scale(1.1)"><g transform="translate(1.5,3) scale(0.55)"><path d="M0,-9 L8,-4.8 V4.6 L0,9 L-8,4.6 V-4.8 Z" fill="#fff" stroke="#222" stroke-width="1.3" stroke-linejoin="round" stroke-linecap="round" /><path d="M0,0 L8,-4.8 V4.6 L0,9 Z" fill="#fff" stroke="#222" stroke-width="1" stroke-linejoin="round" stroke-linecap="round" /><path d="M0,0 L-8,-4.8 V4.6 L0,9 Z" fill="#fff" stroke="#222" stroke-width="1" stroke-linejoin="round" stroke-linecap="round" /><path d="M0,-9 L8,-4.8 L0,0 L-8,-4.8 Z" fill="#fff" stroke="#222" stroke-width="1" stroke-linejoin="round" stroke-linecap="round" /></g><rect x="-9" y="-9.5" width="8.5" height="7.5" rx="0" fill="#333" stroke="none" stroke-width="0" /><path d="M-9,-7 H-0.5 M-9,-4.5 H-0.5 M-6.2,-9.5 V-2 M-3.4,-9.5 V-2" fill="none" stroke="#fff" stroke-width="0.7" stroke-linejoin="round" stroke-linecap="round" /><path d="M-5,-1 Q-7,-1 -7,1 V2.5 Q-7,4 -8.2,4 Q-7,4 -7,5.5 V7.5 Q-7,9 -5,9 M8,-3 Q9.5,-3 9.5,-1 V2 Q9.5,4 10.5,4 Q9.5,4 9.5,5.5 V7.5 Q9.5,9 8,9" fill="none" stroke="#222" stroke-width="1" stroke-linejoin="round" stroke-linecap="round" /></g></g><g transform="translate(1905,548)" ><rect x="-9" y="-9.5" width="8.5" height="7.5" rx="0" fill="#333" stroke="none" stroke-width="0" /><path d="M-9,-7 H-0.5 M-9,-4.5 H-0.5 M-6.2,-9.5 V-2 M-3.4,-9.5 V-2" fill="none" stroke="#fff" stroke-width="0.7" stroke-linejoin="round" stroke-linecap="round" /><path d="M-7.5,-1 Q-10,4 -7.5,9 M7.5,-4 Q10.5,2.5 7.5,9" fill="none" stroke="#222" stroke-width="1.4" stroke-linejoin="round" stroke-linecap="round" /><text x="1.5" y="8" text-anchor="middle" font-family="Liberation Serif, serif" font-style="italic" font-weight="700" font-size="15" fill="#222">x</text></g><g transform="translate(1905,593)" ><rect x="-10" y="-10" width="20" height="20" rx="2" fill="#dcdcdc" stroke="none" stroke-width="0" /><g transform="scale(0.85) translate(0,1.5)"><g transform="rotate(-6)"><rect x="-9.5" y="-4.5" width="19" height="12.5" rx="2.5" fill="#222" stroke="#222" stroke-width="1" /><circle cx="-4.2" cy="1" r="3" fill="#fff" stroke="#fff" stroke-width="0"/><circle cx="4.2" cy="1" r="3" fill="#fff" stroke="#fff" stroke-width="0"/><circle cx="-3.6" cy="1.4" r="1.5" fill="#222" stroke="#222" stroke-width="0"/><circle cx="4.8" cy="0.6" r="1.5" fill="#222" stroke="#222" stroke-width="0"/><path d="M-2,5.5 Q1,7.5 4,5" fill="none" stroke="#fff" stroke-width="0.9" stroke-linejoin="round" stroke-linecap="round" /><path d="M0,-4.5 V-9" fill="none" stroke="#222" stroke-width="1.3" stroke-linejoin="round" stroke-linecap="round" /><path d="M-6,-8.5 H-2 M2,-8.5 H6 M-4,-10 V-7 M4,-10 V-7" fill="none" stroke="#777" stroke-width="1" stroke-linejoin="round" stroke-linecap="round" /></g></g></g><g transform="translate(1905,626)" ><rect x="-10" y="-10" width="20" height="20" rx="2" fill="#4caf50" stroke="none" stroke-width="0" /><path d="M-7.5,-5.5 Q-3.5,-6.5 -0.8,-4.5 V6 Q-3.5,4.5 -7.5,5.5 Z M7.5,-5.5 Q3.5,-6.5 0.8,-4.5 V6 Q3.5,4.5 7.5,5.5 Z" fill="#fff" stroke="none" stroke-width="0" stroke-linejoin="round" stroke-linecap="round" /></g><g transform="translate(1905,659)" ><rect x="-10" y="-10" width="20" height="20" rx="2" fill="#1a56b0" stroke="none" stroke-width="0" /><path d="M-7.5,-5.5 Q-3.5,-6.5 -0.8,-4.5 V6 Q-3.5,4.5 -7.5,5.5 Z M7.5,-5.5 Q3.5,-6.5 0.8,-4.5 V6 Q3.5,4.5 7.5,5.5 Z" fill="#fff" stroke="none" stroke-width="0" stroke-linejoin="round" stroke-linecap="round" /></g><g transform="translate(1900,1036.4)" ><path d="M-10,5.6 A10,10.6 0 0 1 10,5.6 Z" fill="#f4f4f4" stroke="#333" stroke-width="1.3" stroke-linejoin="round" stroke-linecap="round" /><path d="M-7,4 A7,7.4 0 0 1 7,4" fill="none" stroke="#999" stroke-width="0.9" stroke-linejoin="round" stroke-linecap="round" /><path d="M-4.6,3.6 Q-4.6,-1.6 0,-1.6 Q4.6,-1.6 4.6,3.6 Q2.5,3 1.7,1.5 H-1.7 Q-2.5,3 -4.6,3.6 Z" fill="#333" stroke="#333" stroke-width="0.6" stroke-linejoin="round" stroke-linecap="round" /></g></svg><div style="position:absolute;left:0;top:0;width:1919px;height:1079px;will-change:transform"><span class="t" style="left:31.20px;top:12px;font-size:16.8px;color:#7a7a7a;transform:scaleX(1.0460);">onshape</span><span class="t" style="left:141.30px;top:10px;font-size:22.7px;color:#222;font-weight:700;transform:scaleX(0.9381);">1B - Practice Exercise Solutions</span><span class="t" style="left:475.00px;top:16px;font-size:15.5px;color:#999;transform:scaleX(0.9881);">FRCDesignLib Rework</span><span class="t" style="left:693.00px;top:14px;font-size:15.5px;color:#999;transform:scaleX(0.9846);">Stage 1</span><span class="t" style="left:875.00px;top:14px;font-size:14.5px;color:#333;transform:scaleX(0.9532);">225</span><span class="t" style="left:937.00px;top:14px;font-size:14.5px;color:#333;transform:scaleX(0.9940);">5280</span><span class="t" style="left:1008.00px;top:14px;font-size:14.5px;color:#333;">4</span><span class="t" style="left:1560.00px;top:9px;font-size:10px;color:#fff;font-weight:700;transform:scaleX(1.0379);">9+</span><span class="t" style="left:1685.00px;top:12px;font-size:15px;color:#fff;font-weight:700;transform:scaleX(0.8707);">Share</span><span class="t" style="left:1819.00px;top:13px;font-size:15.5px;color:#333;transform:scaleX(0.8905);">Andrew Card</span><span class="t" style="left:144.30px;top:51px;font-size:15.5px;color:#333;transform:scaleX(0.8960);">Sketch</span><span class="t" style="left:1743.00px;top:51px;font-size:14.5px;color:#333;transform:scaleX(0.9383);">Search tools...</span><span class="t" style="left:1836.00px;top:54px;font-size:11px;color:#444;transform:scaleX(1.0497);">alt/⌥</span><span class="t" style="left:1872.60px;top:54px;font-size:11px;color:#444;transform:scaleX(0.9667);">c</span><span class="t" style="left:1259.00px;top:54px;font-size:11.5px;color:#333;transform:scaleX(0.9118);">SM</span><span class="t" style="left:1329.30px;top:53px;font-size:12px;color:#333;transform:scaleX(1.0996);">Ai</span><span class="t" style="left:1362.60px;top:53px;font-size:12px;color:#333;transform:scaleX(0.8659);">Ds</span><span class="t" style="left:86.00px;top:94px;font-size:13.5px;color:#888;font-style:italic;transform:scaleX(0.9458);">Filter by name or type</span><span class="t" style="left:44.00px;top:123px;font-size:14px;color:#222;transform:scaleX(0.9560);-webkit-text-stroke:0.45px #222;">Features (24)</span><span class="t" style="left:62.70px;top:150px;font-size:14px;color:#333;transform:scaleX(0.9540);">Default geometry</span><span class="t" style="left:85.10px;top:176px;font-size:14px;color:#333;transform:scaleX(0.9410);">Origin</span><span class="t" style="left:85.50px;top:202px;font-size:14px;color:#aaa;transform:scaleX(0.9348);">Top</span><span class="t" style="left:84.80px;top:228px;font-size:14px;color:#aaa;transform:scaleX(0.9760);">Front</span><span class="t" style="left:84.80px;top:254px;font-size:14px;color:#aaa;transform:scaleX(0.9423);">Right</span><span class="t" style="left:86.20px;top:280px;font-size:14px;color:#aaa;transform:scaleX(0.9010);">Origin Cube</span><span class="t" style="left:86.20px;top:306px;font-size:14px;color:#333;transform:scaleX(0.9278);">Frame (5)</span><span class="t" style="left:85.30px;top:332px;font-size:14px;color:#aaa;transform:scaleX(0.9354);">Tube Sketch</span><span class="t" style="left:85.30px;top:358px;font-size:14px;color:#333;transform:scaleX(0.9221);">Tubes</span><span class="t" style="left:85.30px;top:384px;font-size:14px;color:#222;font-weight:700;transform:scaleX(0.9294);">Tube Converter</span><span class="t" style="left:86.20px;top:410px;font-size:14px;color:#aaa;font-style:italic;transform:scaleX(0.9217);">Gusset</span><span class="t" style="left:86.20px;top:436px;font-size:14px;color:#aaa;font-style:italic;transform:scaleX(0.9217);">Gusset</span><span class="t" style="left:67.30px;top:462px;font-size:14px;color:#aaa;font-style:italic;transform:scaleX(0.9233);">Gearbox Layout</span><span class="t" style="left:86.20px;top:488px;font-size:14px;color:#333;transform:scaleX(0.9069);">GB Plates (6)</span><span class="t" style="left:67.30px;top:514px;font-size:14px;color:#aaa;font-style:italic;transform:scaleX(0.9467);">Main Belt</span><span class="t" style="left:67.30px;top:540px;font-size:14px;color:#aaa;font-style:italic;transform:scaleX(0.9497);">Inter Shaft</span><span class="t" style="left:67.30px;top:566px;font-size:14px;color:#aaa;font-style:italic;transform:scaleX(0.9408);">Output Shaft</span><span class="t" style="left:86.20px;top:592px;font-size:14px;color:#333;transform:scaleX(0.9338);">Pocketing (4)</span><span class="t" style="left:63.40px;top:714px;font-size:14px;color:#333;transform:scaleX(0.9375);">Parts (4)</span><span class="t" style="left:85.40px;top:740px;font-size:14px;color:#aaa;transform:scaleX(0.8983);">Origin Cube</span><span class="t" style="left:85.40px;top:766px;font-size:14px;color:#222;transform:scaleX(0.9237);">Tube 1"x1"x7"</span><span class="t" style="left:85.40px;top:792px;font-size:14px;color:#222;transform:scaleX(0.9237);">Tube 1"x1"x7"</span><span class="t" style="left:85.40px;top:818px;font-size:14px;color:#222;transform:scaleX(0.9237);">Tube 1"x1"x8"</span><span class="t" style="left:150.30px;top:1055px;font-size:15px;color:#666;transform:scaleX(0.9041);">Exercise 3</span><span class="t" style="left:289.20px;top:1056px;font-size:15px;color:#666;transform:scaleX(0.9097);">Exercise 3 Assembly</span><span class="t" style="left:471.70px;top:1056px;font-size:15.3px;color:#222;transform:scaleX(0.8857);">Exercise 3 Part Studio</span><span class="t" style="left:328.30px;top:87px;font-size:13.8px;color:#222;transform:scaleX(0.9431);-webkit-text-stroke:0.45px #222;">Tube Converter</span><span class="t" style="left:331.70px;top:120px;font-size:9.7px;color:#444;transform:scaleX(1.0271);">Bodies to convert</span><span class="t" style="left:331.90px;top:139px;font-size:13.8px;color:#444;transform:scaleX(0.9505);">Part 4</span><span class="t" style="left:331.90px;top:163px;font-size:13.8px;color:#444;transform:scaleX(0.9505);">Part 3</span><span class="t" style="left:331.90px;top:187px;font-size:13.8px;color:#444;transform:scaleX(0.9769);">Part 2</span><span class="t" style="left:327.30px;top:219px;font-size:13.6px;color:#555;transform:scaleX(0.8738);">Wall Thickness</span><span class="t" style="left:526.80px;top:218px;font-size:14px;color:#333;transform:scaleX(0.9544);">0.063 in</span><span class="t" style="left:341.90px;top:244px;font-size:13.8px;color:#555;transform:scaleX(0.9695);">Hole Pattern</span><span class="t" style="left:332.10px;top:275px;font-size:13.6px;color:#555;transform:scaleX(0.8732);">Direction Hint (Optional)</span><span class="t" style="left:332.10px;top:306px;font-size:13.6px;color:#555;transform:scaleX(0.8462);">Exclude Regions</span><span class="t" style="left:327.40px;top:339px;font-size:13.6px;color:#555;transform:scaleX(0.8594);">2" Face Style</span><span class="t" style="left:407.40px;top:335px;font-size:15.4px;color:#222;transform:scaleX(0.8844);">1" Between Holes</span><span class="t" style="left:327.40px;top:367px;font-size:13.6px;color:#555;transform:scaleX(0.8594);">1" Face Style</span><span class="t" style="left:407.40px;top:363px;font-size:15.4px;color:#222;transform:scaleX(0.8241);">One Row</span><span class="t" style="left:341.90px;top:395px;font-size:13.8px;color:#555;transform:scaleX(0.9303);">Mike Mode (Center Row)</span><span class="t" style="left:327.30px;top:422px;font-size:13.6px;color:#555;transform:scaleX(0.8593);">Hole Spacing</span><span class="t" style="left:542.20px;top:422px;font-size:14px;color:#333;transform:scaleX(0.9384);">0.5 in</span><span class="t" style="left:327.30px;top:448px;font-size:13.6px;color:#555;transform:scaleX(0.8452);">Hole Size</span><span class="t" style="left:527.80px;top:448px;font-size:14px;color:#333;transform:scaleX(0.9340);">0.196 in</span><span class="t" style="left:327.30px;top:474px;font-size:13.6px;color:#555;transform:scaleX(0.8820);">Hole/Feature Intersection Margin</span><span class="t" style="left:552.90px;top:474px;font-size:14px;color:#333;transform:scaleX(0.9501);">0 in</span><span class="t" style="left:328.30px;top:497px;font-size:15.4px;color:#222;transform:scaleX(0.8826);">Centered on Tube</span><span class="t" style="left:327.30px;top:528px;font-size:13.6px;color:#555;transform:scaleX(0.9005);">Pattern start offset</span><span class="t" style="left:552.90px;top:528px;font-size:14px;color:#333;transform:scaleX(0.9501);">0 in</span><span class="t" style="left:327.30px;top:554px;font-size:13.6px;color:#555;transform:scaleX(0.8628);">End Margin Offset</span><span class="t" style="left:552.90px;top:554px;font-size:14px;color:#333;transform:scaleX(0.9501);">0 in</span><span class="t" style="left:341.90px;top:580px;font-size:13.8px;color:#555;transform:scaleX(0.9413);">Custom Name</span><span class="t" style="left:341.90px;top:607px;font-size:13.8px;color:#555;transform:scaleX(0.9530);">Name in Metric</span><span class="t" style="left:539.80px;top:634px;font-size:13.8px;color:#333;transform:scaleX(0.8747);">Final</span></div></body></html>
